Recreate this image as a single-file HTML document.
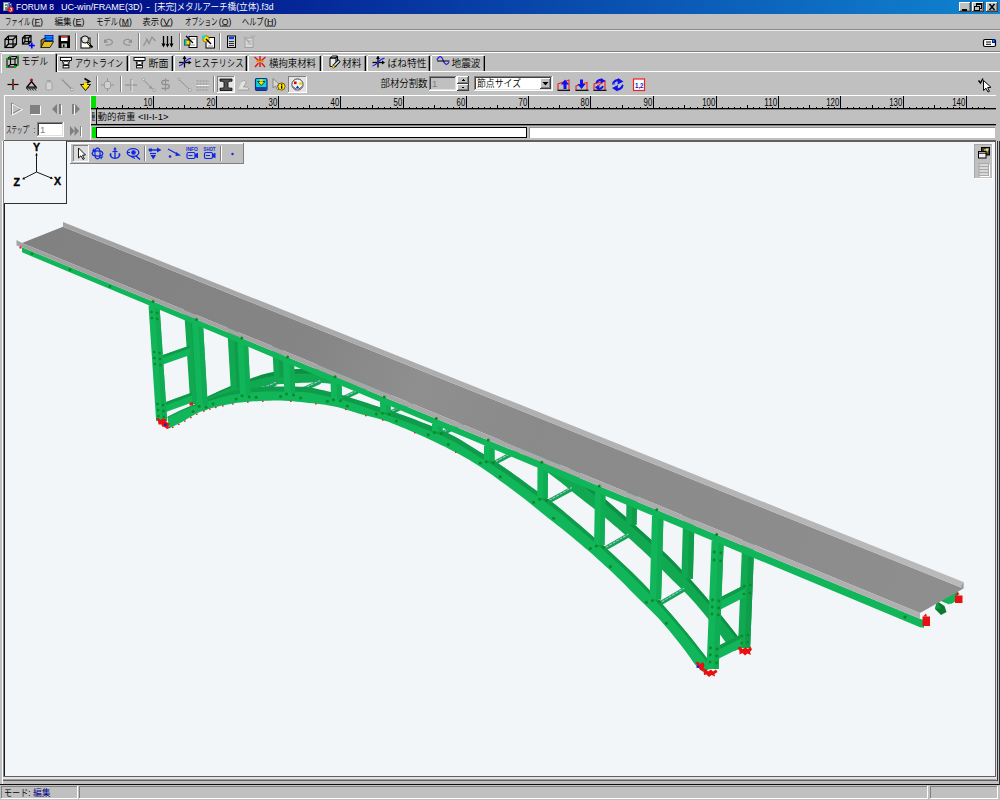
<!DOCTYPE html>
<html lang="ja"><head><meta charset="utf-8"><title>FORUM 8 UC-win/FRAME(3D) - [未完]メタルアーチ橋(立体).f3d</title>
<style>
html,body{margin:0;padding:0;}
body{width:1000px;height:800px;overflow:hidden;background:#c0c0c0;position:relative;font-family:"Liberation Sans","Noto Sans CJK JP",sans-serif;}
.r{position:absolute;overflow:hidden;}
.r svg{display:block;}
svg text{font-family:"Liberation Sans","Noto Sans CJK JP",sans-serif;white-space:pre;font-weight:350;}
</style></head><body>
<div id="titlebar" class="r" style="left:0px;top:0px;width:1000px;height:14px;"><svg width="1000" height="14" viewBox="0 0 1000 14" shape-rendering="crispEdges"><defs><linearGradient id="tg" x1="0" x2="1" y1="0" y2="0"><stop offset="0" stop-color="#000080"/><stop offset="1" stop-color="#1084d0"/></linearGradient></defs><rect x="0" y="0" width="1000" height="14" fill="url(#tg)"/><rect x="2.5" y="1.5" width="7" height="9.5" fill="#7c8c88"/><rect x="3.5" y="2.5" width="4.5" height="1.6" fill="#e8f0e8"/><rect x="3.5" y="2.5" width="1.6" height="7" fill="#e8f0e8"/><rect x="3.5" y="5.5" width="3.5" height="1.4" fill="#e8f0e8"/><rect x="5.5" y="7.5" width="2" height="3" fill="#2a9070"/><rect x="8.5" y="2.5" width="3.8" height="5" fill="#2848c8" rx="1.5"/><rect x="9.5" y="3.6" width="1.5" height="1.2" fill="#c0d0ff"/><g transform="translate(0,0)" shape-rendering="geometricPrecision"><circle cx="10.6" cy="9.6" r="3" fill="#e01818"/><path d="M10 8.2 h1.6 v2.2 c0 1 -1.6 1 -1.8 0.2" fill="none" stroke="#fff" stroke-width="0.9"/></g><text x="16" y="10.2" font-size="9.6" fill="#fff" textLength="38" lengthAdjust="spacingAndGlyphs">FORUM 8</text><text x="61" y="10.2" font-size="9.6" fill="#fff" textLength="81.5" lengthAdjust="spacingAndGlyphs">UC-win/FRAME(3D)</text><text x="146" y="10.2" font-size="9.6" fill="#fff" textLength="4" lengthAdjust="spacingAndGlyphs">-</text><text x="154.5" y="10.2" font-size="9.6" fill="#fff" textLength="119" lengthAdjust="spacingAndGlyphs">[未完]メタルアーチ橋(立体).f3d</text><rect x="959" y="2" width="12" height="10" fill="#c0c0c0"/><rect x="959" y="2" width="11" height="1" fill="#ffffff"/><rect x="959" y="2" width="1" height="9" fill="#ffffff"/><rect x="959" y="11" width="12" height="1" fill="#404040"/><rect x="970" y="2" width="1" height="10" fill="#404040"/><rect x="960" y="10" width="10" height="1" fill="#808080"/><rect x="969" y="3" width="1" height="8" fill="#808080"/><rect x="972" y="2" width="12" height="10" fill="#c0c0c0"/><rect x="972" y="2" width="11" height="1" fill="#ffffff"/><rect x="972" y="2" width="1" height="9" fill="#ffffff"/><rect x="972" y="11" width="12" height="1" fill="#404040"/><rect x="983" y="2" width="1" height="10" fill="#404040"/><rect x="973" y="10" width="10" height="1" fill="#808080"/><rect x="982" y="3" width="1" height="8" fill="#808080"/><rect x="986" y="2" width="12" height="10" fill="#c0c0c0"/><rect x="986" y="2" width="11" height="1" fill="#ffffff"/><rect x="986" y="2" width="1" height="9" fill="#ffffff"/><rect x="986" y="11" width="12" height="1" fill="#404040"/><rect x="997" y="2" width="1" height="10" fill="#404040"/><rect x="987" y="10" width="10" height="1" fill="#808080"/><rect x="996" y="3" width="1" height="8" fill="#808080"/><rect x="962" y="9" width="5" height="1.6" fill="#000"/><rect x="976" y="3.5" width="5" height="4.5" fill="none" stroke="#000" stroke-width="1"/><rect x="976" y="3" width="5" height="1.5" fill="#000"/><rect x="974.5" y="6" width="5" height="4" fill="#c0c0c0" stroke="#000" stroke-width="1"/><rect x="974" y="5.5" width="6" height="1.5" fill="#000"/><line x1="989.5" y1="4" x2="994.5" y2="10" stroke="#000" stroke-width="1.5" shape-rendering="geometricPrecision"/><line x1="994.5" y1="4" x2="989.5" y2="10" stroke="#000" stroke-width="1.5" shape-rendering="geometricPrecision"/></svg></div>
<div id="menubar" class="r" style="left:0px;top:14px;width:1000px;height:17px;"><svg width="1000" height="17" viewBox="0 14 1000 17" shape-rendering="crispEdges"><text x="5" y="24.5" font-size="9.6" fill="#000" textLength="25.5" lengthAdjust="spacingAndGlyphs">ファイル</text><text x="31.5" y="24.5" font-size="9.6" fill="#000" textLength="11.5" lengthAdjust="spacingAndGlyphs">(<tspan text-decoration="underline">F</tspan>)</text><text x="54.5" y="24.5" font-size="9.6" fill="#000" textLength="17" lengthAdjust="spacingAndGlyphs">編集</text><text x="72.5" y="24.5" font-size="9.6" fill="#000" textLength="12" lengthAdjust="spacingAndGlyphs">(<tspan text-decoration="underline">E</tspan>)</text><text x="96.3" y="24.5" font-size="9.6" fill="#000" textLength="21.5" lengthAdjust="spacingAndGlyphs">モデル</text><text x="118.8" y="24.5" font-size="9.6" fill="#000" textLength="13" lengthAdjust="spacingAndGlyphs">(<tspan text-decoration="underline">M</tspan>)</text><text x="142.5" y="24.5" font-size="9.6" fill="#000" textLength="16.5" lengthAdjust="spacingAndGlyphs">表示</text><text x="160" y="24.5" font-size="9.6" fill="#000" textLength="13" lengthAdjust="spacingAndGlyphs">(<tspan text-decoration="underline">V</tspan>)</text><text x="185" y="24.5" font-size="9.6" fill="#000" textLength="32.5" lengthAdjust="spacingAndGlyphs">オプション</text><text x="218.8" y="24.5" font-size="9.6" fill="#000" textLength="12.5" lengthAdjust="spacingAndGlyphs">(<tspan text-decoration="underline">O</tspan>)</text><text x="242" y="24.5" font-size="9.6" fill="#000" textLength="21.5" lengthAdjust="spacingAndGlyphs">ヘルプ</text><text x="264" y="24.5" font-size="9.6" fill="#000" textLength="12.5" lengthAdjust="spacingAndGlyphs">(<tspan text-decoration="underline">H</tspan>)</text><rect x="0" y="29" width="1000" height="1" fill="#8c8c8c"/><rect x="0" y="30" width="1000" height="1" fill="#ececec"/></svg></div>
<div id="toolbar1" class="r" style="left:0px;top:31px;width:1000px;height:22px;"><svg width="1000" height="22" viewBox="0 31 1000 22" shape-rendering="crispEdges"><rect x="0" y="51" width="1000" height="1" fill="#808080"/><rect x="0" y="52" width="1000" height="1" fill="#ffffff"/><rect x="75" y="33" width="1" height="17" fill="#808080"/><rect x="76" y="33" width="1" height="17" fill="#ffffff"/><rect x="97" y="33" width="1" height="17" fill="#808080"/><rect x="98" y="33" width="1" height="17" fill="#ffffff"/><rect x="138" y="33" width="1" height="17" fill="#808080"/><rect x="139" y="33" width="1" height="17" fill="#ffffff"/><rect x="179" y="33" width="1" height="17" fill="#808080"/><rect x="180" y="33" width="1" height="17" fill="#ffffff"/><rect x="219" y="33" width="1" height="17" fill="#808080"/><rect x="220" y="33" width="1" height="17" fill="#ffffff"/><g transform="translate(0,0)" shape-rendering="geometricPrecision"><rect x="5" y="39.5" width="8" height="8" fill="none" stroke="#000" stroke-width="1.2"/><rect x="8.5" y="36" width="8" height="8" fill="none" stroke="#000" stroke-width="1.2"/><line x1="5" y1="39.5" x2="8.5" y2="36" stroke="#000" stroke-width="1.2"/><line x1="13" y1="39.5" x2="16.5" y2="36" stroke="#000" stroke-width="1.2"/><line x1="5" y1="47.5" x2="8.5" y2="44" stroke="#000" stroke-width="1.2"/><line x1="13" y1="47.5" x2="16.5" y2="44" stroke="#000" stroke-width="1.2"/><rect x="22.5" y="38" width="6" height="6" fill="none" stroke="#000" stroke-width="1.2"/><rect x="25" y="35.5" width="6" height="6" fill="none" stroke="#000" stroke-width="1.2"/><line x1="22.5" y1="38" x2="25" y2="35.5" stroke="#000" stroke-width="1.2"/><line x1="28.5" y1="38" x2="31" y2="35.5" stroke="#000" stroke-width="1.2"/><line x1="22.5" y1="44" x2="25" y2="41.5" stroke="#000" stroke-width="1.2"/><line x1="28.5" y1="44" x2="31" y2="41.5" stroke="#000" stroke-width="1.2"/><rect x="31" y="42.5" width="1.6" height="6" fill="#0000ff"/><rect x="28.8" y="44.7" width="6" height="1.6" fill="#0000ff"/><polygon points="41,47.5 41,40 44,38.5 47,38.5 47,40" fill="#a08000" stroke="#000" stroke-width="0.8"/><polygon points="41,47.5 44,41.5 53.5,41.5 50,47.5" fill="#e0c020" stroke="#000" stroke-width="0.8"/><rect x="45" y="35.5" width="8" height="5" fill="#00c0ff" stroke="#0000c0" stroke-width="0.8"/><line x1="45" y1="37.2" x2="53" y2="37.2" stroke="#0000c0" stroke-width="0.7"/><line x1="45" y1="38.8" x2="53" y2="38.8" stroke="#0000c0" stroke-width="0.7"/><rect x="58.5" y="35.5" width="11.5" height="12.5" fill="#000"/><rect x="61" y="36.5" width="6.5" height="4.5" fill="#fff"/><rect x="61" y="36.5" width="6.5" height="1.2" fill="#e00000"/><rect x="61.5" y="43.5" width="5.5" height="4" fill="#c0c0c0"/><rect x="63" y="44.5" width="1.5" height="2.5" fill="#000"/><rect x="81" y="38" width="9" height="10" fill="#fff" stroke="#000" stroke-width="1"/><circle cx="85" cy="39.5" r="3.6" fill="#e0e0e0" stroke="#000" stroke-width="1"/><line x1="87.5" y1="42.5" x2="92.5" y2="47.5" stroke="#000" stroke-width="2"/><line x1="88" y1="43" x2="90" y2="45" stroke="#e0c000" stroke-width="1"/><path d="M105.5 45 C112 46 114 42 111 40 C109 38.5 106 39.5 105 41.5" fill="none" stroke="#909090" stroke-width="1.2"/><polygon points="104,39 104,43 108,42.5" fill="#909090"/><path d="M130.5 45 C124 46 122 42 125 40 C127 38.5 130 39.5 131 41.5" fill="none" stroke="#909090" stroke-width="1.2"/><polygon points="132,39 132,43 128,42.5" fill="#909090"/><polyline points="143.5,46 147,39.5 149,43.5 152,37 155.5,41" fill="none" stroke="#909090" stroke-width="1.2"/><line x1="146" y1="38" x2="148" y2="41" stroke="#909090" stroke-width="1"/><line x1="163.5" y1="36" x2="163.5" y2="46" stroke="#000" stroke-width="1.3"/><line x1="167.5" y1="36" x2="167.5" y2="46" stroke="#000" stroke-width="1.3"/><line x1="171.5" y1="36" x2="171.5" y2="46" stroke="#000" stroke-width="1.3"/><polygon points="161.5,43.5 165.5,43.5 163.5,47.5" fill="#000"/><polygon points="169.5,43.5 173.5,43.5 171.5,47.5" fill="#000"/><polygon points="165.8,44 169.2,44 167.5,47.5" fill="#000"/><rect x="189" y="36.5" width="8" height="11" fill="#fff" stroke="#000" stroke-width="1"/><rect x="184.5" y="40" width="5.5" height="5" fill="#ffe000" stroke="#000" stroke-width="0.8"/><line x1="186" y1="36" x2="193" y2="43" stroke="#000" stroke-width="1.2"/><line x1="190.5" y1="39" x2="195" y2="39" stroke="#808080" stroke-width="0.8"/><line x1="190.5" y1="45" x2="195" y2="45" stroke="#808080" stroke-width="0.8"/><rect x="184.5" y="40" width="2" height="5" fill="#00c0c0"/><rect x="206" y="37.5" width="8.5" height="10.5" fill="#fff" stroke="#000" stroke-width="1"/><circle cx="206" cy="39" r="3.2" fill="#ffe000" stroke="#806000" stroke-width="0.8"/><line x1="206" y1="39" x2="211" y2="44" stroke="#000" stroke-width="1.4"/><rect x="202" y="35.5" width="3" height="3" fill="#00e0e0"/><line x1="208" y1="46" x2="213" y2="46" stroke="#808080" stroke-width="0.8"/><rect x="227.5" y="36" width="8" height="11.5" fill="#d0d0d0" stroke="#000" stroke-width="1"/><rect x="229" y="37" width="5" height="2.2" fill="#0040ff"/><line x1="229" y1="41.5" x2="234" y2="41.5" stroke="#000" stroke-width="0.8"/><line x1="229" y1="43.5" x2="234" y2="43.5" stroke="#000" stroke-width="0.8"/><line x1="229" y1="45.5" x2="234" y2="45.5" stroke="#000" stroke-width="0.8"/><rect x="245" y="38" width="8" height="9.5" fill="#d8d8d8" stroke="#a0a0a0" stroke-width="1"/><line x1="244" y1="37" x2="250" y2="43" stroke="#a8a8a8" stroke-width="1.5"/><line x1="247" y1="41" x2="252" y2="41" stroke="#a8a8a8" stroke-width="0.8"/><line x1="247" y1="44" x2="252" y2="44" stroke="#a8a8a8" stroke-width="0.8"/><polygon points="250,35.5 256,35.5 253,39" fill="#b0b0b0"/><rect x="983.5" y="39.5" width="12" height="7" fill="#fff" stroke="#000" stroke-width="1.2" rx="1.5"/><line x1="986" y1="42" x2="991" y2="42" stroke="#000" stroke-width="1"/><line x1="986" y1="44.3" x2="991" y2="44.3" stroke="#000" stroke-width="1"/><rect x="992" y="39.5" width="3" height="3.5" fill="#0020c0"/><rect x="993" y="40.2" width="1.2" height="1.2" fill="#00e0ff"/></g></svg></div>
<div id="tabs" class="r" style="left:0px;top:53px;width:1000px;height:20px;"><svg width="1000" height="20" viewBox="0 53 1000 20" shape-rendering="crispEdges"><rect x="57" y="71" width="943" height="1" fill="#ffffff"/><rect x="58" y="55" width="69" height="1" fill="#ffffff"/><rect x="57" y="56" width="1" height="15" fill="#ffffff"/><rect x="127" y="56" width="1" height="15" fill="#000"/><rect x="126" y="56" width="1" height="15" fill="#808080"/><text x="75" y="67" font-size="9.8" fill="#000" textLength="48" lengthAdjust="spacingAndGlyphs">アウトライン</text><rect x="130" y="55" width="42" height="1" fill="#ffffff"/><rect x="129" y="56" width="1" height="15" fill="#ffffff"/><rect x="172" y="56" width="1" height="15" fill="#000"/><rect x="171" y="56" width="1" height="15" fill="#808080"/><text x="148.5" y="67" font-size="9.8" fill="#000" textLength="20" lengthAdjust="spacingAndGlyphs">断面</text><rect x="175" y="55" width="71" height="1" fill="#ffffff"/><rect x="174" y="56" width="1" height="15" fill="#ffffff"/><rect x="246" y="56" width="1" height="15" fill="#000"/><rect x="245" y="56" width="1" height="15" fill="#808080"/><text x="193.5" y="67" font-size="9.8" fill="#000" textLength="50" lengthAdjust="spacingAndGlyphs">ヒステリシス</text><rect x="249" y="55" width="71" height="1" fill="#ffffff"/><rect x="248" y="56" width="1" height="15" fill="#ffffff"/><rect x="320" y="56" width="1" height="15" fill="#000"/><rect x="319" y="56" width="1" height="15" fill="#808080"/><text x="269" y="67" font-size="9.8" fill="#000" textLength="47" lengthAdjust="spacingAndGlyphs">横拘束材料</text><rect x="323" y="55" width="42" height="1" fill="#ffffff"/><rect x="322" y="56" width="1" height="15" fill="#ffffff"/><rect x="365" y="56" width="1" height="15" fill="#000"/><rect x="364" y="56" width="1" height="15" fill="#808080"/><text x="342" y="67" font-size="9.8" fill="#000" textLength="19.5" lengthAdjust="spacingAndGlyphs">材料</text><rect x="368" y="55" width="61" height="1" fill="#ffffff"/><rect x="367" y="56" width="1" height="15" fill="#ffffff"/><rect x="429" y="56" width="1" height="15" fill="#000"/><rect x="428" y="56" width="1" height="15" fill="#808080"/><text x="387.5" y="67" font-size="9.8" fill="#000" textLength="39" lengthAdjust="spacingAndGlyphs">ばね特性</text><rect x="432" y="55" width="52" height="1" fill="#ffffff"/><rect x="431" y="56" width="1" height="15" fill="#ffffff"/><rect x="484" y="56" width="1" height="15" fill="#000"/><rect x="483" y="56" width="1" height="15" fill="#808080"/><text x="451.5" y="67" font-size="9.8" fill="#000" textLength="29" lengthAdjust="spacingAndGlyphs">地震波</text><rect x="2" y="53" width="53" height="1" fill="#ffffff"/><rect x="1" y="54" width="1" height="19" fill="#ffffff"/><rect x="56" y="54" width="1" height="18" fill="#000"/><rect x="55" y="54" width="1" height="18" fill="#808080"/><rect x="2" y="54" width="53" height="19" fill="#c0c0c0"/><text x="21.5" y="64.8" font-size="9.8" fill="#000" textLength="26.5" lengthAdjust="spacingAndGlyphs">モデル</text><g transform="translate(0,0)" shape-rendering="geometricPrecision"><rect x="7" y="59" width="8" height="8" fill="none" stroke="#000" stroke-width="1.1"/><rect x="10.5" y="56.5" width="7.5" height="8" fill="none" stroke="#000" stroke-width="1.1"/><line x1="7" y1="59" x2="10.5" y2="56.5" stroke="#000" stroke-width="1.1"/><line x1="15" y1="59" x2="18" y2="56.5" stroke="#000" stroke-width="1.1"/><line x1="7" y1="67" x2="10.5" y2="64.5" stroke="#000" stroke-width="1.1"/><line x1="15" y1="67" x2="18" y2="64.5" stroke="#000" stroke-width="1.1"/><rect x="6" y="58" width="2" height="2" fill="#00b000"/><rect x="14" y="66" width="2" height="2" fill="#00b000"/><rect x="6" y="66" width="2" height="2" fill="#00b000"/><rect x="17" y="55.5" width="2" height="2" fill="#00b000"/><rect x="17" y="63.5" width="2" height="2" fill="#00b000"/><rect x="9.5" y="55.5" width="2" height="2" fill="#00b000"/><rect x="60.5" y="57.5" width="11" height="3" fill="#fff" stroke="#000" stroke-width="0.9"/><path d="M62.5 60.5 l1 4.8 h5 l1 -4.8 z" fill="#fff" stroke="#000" stroke-width="0.9"/><rect x="63.7" y="61.3" width="4.6" height="3.2" fill="#fff" stroke="#000" stroke-width="0.8" rx="1"/><rect x="63.1" y="65.5" width="5.8" height="2.4" fill="#fff" stroke="#000" stroke-width="0.9"/><rect x="134" y="57.5" width="11" height="3" fill="#fff" stroke="#000" stroke-width="0.9"/><path d="M136 60.5 l1 4.8 h5 l1 -4.8 z" fill="#fff" stroke="#000" stroke-width="0.9"/><rect x="137.2" y="61.3" width="4.6" height="3.2" fill="#fff" stroke="#000" stroke-width="0.8" rx="1"/><rect x="136.6" y="65.5" width="5.8" height="2.4" fill="#fff" stroke="#000" stroke-width="0.9"/><line x1="184.5" y1="56.5" x2="184.5" y2="67.5" stroke="#000" stroke-width="1.3"/><line x1="179" y1="62.5" x2="190" y2="62.5" stroke="#000" stroke-width="1.3"/><polygon points="182.5,59 186.5,59 184.5,55.7" fill="#000"/><polygon points="188.5,60.5 188.5,64.5 191.5,62.5" fill="#000"/><path d="M179 66.0 C184 65.5 185 58.5 191 58.3" fill="none" stroke="#2020e0" stroke-width="1.2"/><line x1="378" y1="56.5" x2="378" y2="67.5" stroke="#000" stroke-width="1.3"/><line x1="372.5" y1="62.5" x2="383.5" y2="62.5" stroke="#000" stroke-width="1.3"/><polygon points="376,59 380,59 378,55.7" fill="#000"/><polygon points="382,60.5 382,64.5 385,62.5" fill="#000"/><path d="M372.5 66.0 C377.5 65.5 378.5 58.5 384.5 58.3" fill="none" stroke="#2020e0" stroke-width="1.2"/><line x1="260" y1="56" x2="260" y2="67" stroke="#e01010" stroke-width="1.4"/><line x1="254.5" y1="57" x2="258.5" y2="60.5" stroke="#e01010" stroke-width="1.3"/><line x1="265.5" y1="57" x2="261.5" y2="60.5" stroke="#e01010" stroke-width="1.3"/><line x1="256" y1="61.5" x2="264" y2="61.5" stroke="#e0a000" stroke-width="1.2"/><line x1="255" y1="67" x2="258.5" y2="63" stroke="#e01010" stroke-width="1.3"/><line x1="265" y1="67" x2="261.5" y2="63" stroke="#e01010" stroke-width="1.3"/><path d="M330 58 l2.5 -2 h5 l-1.5 2 z M330 58 h6 v8.5 h-6 z M336 58 l1.5 -2 v7" fill="#e8e8e8" stroke="#000" stroke-width="1"/><line x1="333.5" y1="66.5" x2="339.5" y2="60.5" stroke="#000" stroke-width="3.2"/><line x1="334" y1="66" x2="339" y2="61" stroke="#d0f0ff" stroke-width="1.6"/><circle cx="333.5" cy="66.7" r="1.3" fill="#ffe000" stroke="#605000" stroke-width="0.6"/><path d="M437 60 C439 55.5 441.5 55.5 443 60 S 447 66 449 62" fill="none" stroke="#2020e0" stroke-width="1.2"/><line x1="437" y1="61" x2="444" y2="61" stroke="#000" stroke-width="1"/><line x1="444" y1="61" x2="449.5" y2="61" stroke="#000" stroke-width="1"/></g></svg></div>
<div id="toolbar2" class="r" style="left:0px;top:73px;width:1000px;height:22px;"><svg width="1000" height="22" viewBox="0 73 1000 22" shape-rendering="crispEdges"><rect x="96" y="76" width="1" height="16" fill="#808080"/><rect x="97" y="76" width="1" height="16" fill="#ffffff"/><rect x="120" y="76" width="1" height="16" fill="#808080"/><rect x="121" y="76" width="1" height="16" fill="#ffffff"/><rect x="213" y="76" width="1" height="16" fill="#808080"/><rect x="214" y="76" width="1" height="16" fill="#ffffff"/><rect x="217" y="76" width="18" height="17" fill="#e4e4e4"/><rect x="217" y="76" width="18" height="1" fill="#808080"/><rect x="217" y="76" width="1" height="17" fill="#808080"/><rect x="217" y="92" width="18" height="1" fill="#ffffff"/><rect x="234" y="76" width="1" height="17" fill="#ffffff"/><rect x="288" y="76" width="19" height="17" fill="#e4e4e4"/><rect x="288" y="76" width="19" height="1" fill="#808080"/><rect x="288" y="76" width="1" height="17" fill="#808080"/><rect x="288" y="92" width="19" height="1" fill="#ffffff"/><rect x="306" y="76" width="1" height="17" fill="#ffffff"/><text x="380.5" y="87" font-size="9.8" fill="#000" textLength="47" lengthAdjust="spacingAndGlyphs">部材分割数</text><rect x="429" y="76" width="28" height="15" fill="#c0c0c0"/><rect x="429" y="76" width="28" height="1" fill="#808080"/><rect x="429" y="76" width="1" height="15" fill="#808080"/><rect x="430" y="77" width="26" height="1" fill="#404040"/><rect x="430" y="77" width="1" height="13" fill="#404040"/><rect x="429" y="90" width="28" height="1" fill="#ffffff"/><rect x="456" y="76" width="1" height="15" fill="#ffffff"/><rect x="430" y="89" width="26" height="1" fill="#dfdfdf"/><rect x="455" y="77" width="1" height="13" fill="#dfdfdf"/><text x="432" y="87" font-size="9.5" fill="#808080">1</text><rect x="457" y="76" width="12" height="8" fill="#c0c0c0"/><rect x="457" y="76" width="11" height="1" fill="#ffffff"/><rect x="457" y="76" width="1" height="7" fill="#ffffff"/><rect x="457" y="83" width="12" height="1" fill="#404040"/><rect x="468" y="76" width="1" height="8" fill="#404040"/><rect x="458" y="82" width="10" height="1" fill="#808080"/><rect x="467" y="77" width="1" height="6" fill="#808080"/><rect x="457" y="84" width="12" height="7" fill="#c0c0c0"/><rect x="457" y="84" width="11" height="1" fill="#ffffff"/><rect x="457" y="84" width="1" height="6" fill="#ffffff"/><rect x="457" y="90" width="12" height="1" fill="#404040"/><rect x="468" y="84" width="1" height="7" fill="#404040"/><rect x="458" y="89" width="10" height="1" fill="#808080"/><rect x="467" y="85" width="1" height="5" fill="#808080"/><polygon points="461,81 465,81 463,79" fill="#000"/><polygon points="461,86.5 465,86.5 463,88.5" fill="#000"/><rect x="474" y="76" width="79" height="15" fill="#fff"/><rect x="474" y="76" width="79" height="1" fill="#808080"/><rect x="474" y="76" width="1" height="15" fill="#808080"/><rect x="475" y="77" width="77" height="1" fill="#404040"/><rect x="475" y="77" width="1" height="13" fill="#404040"/><rect x="474" y="90" width="79" height="1" fill="#ffffff"/><rect x="552" y="76" width="1" height="15" fill="#ffffff"/><rect x="475" y="89" width="77" height="1" fill="#dfdfdf"/><rect x="551" y="77" width="1" height="13" fill="#dfdfdf"/><text x="477" y="87" font-size="9.8" fill="#000" textLength="44" lengthAdjust="spacingAndGlyphs">節点サイズ</text><rect x="540" y="78" width="11" height="11" fill="#c0c0c0"/><rect x="540" y="78" width="10" height="1" fill="#ffffff"/><rect x="540" y="78" width="1" height="10" fill="#ffffff"/><rect x="540" y="88" width="11" height="1" fill="#404040"/><rect x="550" y="78" width="1" height="11" fill="#404040"/><rect x="541" y="87" width="9" height="1" fill="#808080"/><rect x="549" y="79" width="1" height="9" fill="#808080"/><polygon points="542.5,82 548.5,82 545.5,85.5" fill="#000" shape-rendering="geometricPrecision"/><g transform="translate(0,0)" shape-rendering="geometricPrecision"><line x1="13" y1="79" x2="13" y2="90" stroke="#000" stroke-width="1.2"/><line x1="7.5" y1="84.5" x2="18.5" y2="84.5" stroke="#000" stroke-width="1.2"/><rect x="12" y="83.5" width="2" height="2" fill="#e00000"/><circle cx="31.5" cy="80" r="1.5" fill="#d00000"/><polygon points="31.5,81.5 27,87 36,87" fill="none" stroke="#000" stroke-width="1.2"/><line x1="26" y1="88" x2="37" y2="88" stroke="#000" stroke-width="1"/><line x1="27" y1="88.5" x2="28.5" y2="90.5" stroke="#000" stroke-width="0.9"/><line x1="29.5" y1="88.5" x2="31" y2="90.5" stroke="#000" stroke-width="0.9"/><line x1="32" y1="88.5" x2="33.5" y2="90.5" stroke="#000" stroke-width="0.9"/><line x1="34.5" y1="88.5" x2="36" y2="90.5" stroke="#000" stroke-width="0.9"/><rect x="46" y="82" width="6" height="8" fill="#d4d4d4" stroke="#a0a0a0" stroke-width="1" rx="1.5"/><line x1="47" y1="80.5" x2="51" y2="80.5" stroke="#a0a0a0" stroke-width="1"/><line x1="62" y1="79.5" x2="72" y2="89.5" stroke="#909090" stroke-width="1.2"/><circle cx="72" cy="89.5" r="1.4" fill="#f0f0f0" stroke="#909090" stroke-width="0.9"/><circle cx="62" cy="79.5" r="0.9" fill="#f0f0f0" stroke="#909090" stroke-width="0.7"/><path d="M84.5 78.5 l5 3 l-6 3 l5 3" fill="none" stroke="#000" stroke-width="1.6"/><polygon points="80.5,84.5 90.5,84.5 85.5,90.5" fill="#ffe000" stroke="#000" stroke-width="0.9"/><rect x="83.8" y="82.5" width="3.4" height="3" fill="#ffe000"/><line x1="107.5" y1="78.5" x2="107.5" y2="91" stroke="#909090" stroke-width="1"/><line x1="101" y1="85" x2="114" y2="85" stroke="#909090" stroke-width="1"/><rect x="104.5" y="81.5" width="6" height="7" fill="#d0d0d0" stroke="#a0a0a0" stroke-width="1" rx="1.5"/><line x1="131" y1="79" x2="131" y2="91" stroke="#909090" stroke-width="1.2"/><line x1="125" y1="85" x2="137" y2="85" stroke="#909090" stroke-width="1.2"/><line x1="132" y1="80" x2="132" y2="92" stroke="#fff" stroke-width="0.6"/><line x1="143" y1="79.5" x2="153" y2="89.5" stroke="#909090" stroke-width="1"/><circle cx="143.5" cy="79.5" r="1.2" fill="#f0f0f0" stroke="#909090" stroke-width="0.8"/><circle cx="154" cy="90" r="1.3" fill="#f0f0f0" stroke="#909090" stroke-width="0.8"/><polygon points="151.5,85.5 151.5,88.5 148.5,88.5" fill="#909090"/><path d="M169 80.5 h-5 c-3 0 -3 4 0 4 h3 c3 0 3 4 0 4 h-5.5" fill="none" stroke="#909090" stroke-width="1.3"/><line x1="165.5" y1="78.5" x2="165.5" y2="91" stroke="#909090" stroke-width="1"/><line x1="179" y1="79.5" x2="189.5" y2="89.5" stroke="#909090" stroke-width="1"/><circle cx="179" cy="79.3" r="1.1" fill="#f0f0f0" stroke="#909090" stroke-width="0.8"/><circle cx="190" cy="90" r="1.4" fill="#f0f0f0" stroke="#909090" stroke-width="0.8"/><line x1="196.5" y1="81" x2="209" y2="81" stroke="#909090" stroke-width="1" stroke-dasharray="2 1"/><line x1="196.5" y1="84" x2="209" y2="84" stroke="#909090" stroke-width="1" stroke-dasharray="2 1"/><line x1="196.5" y1="87" x2="209" y2="87" stroke="#909090" stroke-width="1" stroke-dasharray="2 1"/><line x1="196.5" y1="90" x2="209" y2="90" stroke="#909090" stroke-width="1" stroke-dasharray="2 1"/><line x1="196.5" y1="85.5" x2="209" y2="85.5" stroke="#fff" stroke-width="0.8"/><path d="M220 79 h12 v2.2 c-3.5 0 -4 0.5 -4 2 v3 c0 1.5 0.5 2 4 2 v2.3 h-12 v-2.3 c3.5 0 4 -0.5 4 -2 v-3 c0 -1.5 -0.5 -2 -4 -2 z" fill="#505050" stroke="#000" stroke-width="0.8"/><path d="M238 90 h11.5 l-2 -3 h-4 l2.5 -4 c0.8 -2.5 -3 -4 -4.5 -1" fill="#e0e0e0" stroke="#a0a0a0" stroke-width="1"/><rect x="255.5" y="78.5" width="11.5" height="12" fill="#00d8e8" stroke="#103080" stroke-width="1.2" rx="1.2"/><rect x="256" y="87" width="10.5" height="3" fill="#2040a0"/><polygon points="257.5,81.5 265,81.5 261.2,85.5" fill="#ffe000" stroke="#000" stroke-width="0.7"/><rect x="259.8" y="79.3" width="3" height="2.4" fill="#ffe000"/><polygon points="273,78.5 273,88 275.5,86 277.5,90 279,89.3 277,85.3 280,85" fill="#d8d8d8" stroke="#808080" stroke-width="0.9"/><circle cx="281.5" cy="86.5" r="3.6" fill="#ffe800" stroke="#504000" stroke-width="0.8"/><rect x="281" y="85.5" width="1.3" height="3.2" fill="#000"/><rect x="281" y="83.8" width="1.3" height="1.1" fill="#000"/><circle cx="297.5" cy="84.5" r="5.6" fill="#f4f4f4" stroke="#404040" stroke-width="1"/><rect x="294" y="81.5" width="2.6" height="2.6" fill="#e00000"/><rect x="299.2" y="82.3" width="2.6" height="2.6" fill="#e8d000"/><polygon points="295.5,88.5 299.5,88.5 297.5,85.5" fill="#1030c0"/><line x1="293" y1="86.5" x2="296" y2="89" stroke="#404040" stroke-width="0.8"/><line x1="302" y1="86.5" x2="299" y2="89" stroke="#404040" stroke-width="0.8"/><polyline points="558,90 558,84 569,80 569,90" fill="none" stroke="#f02020" stroke-width="1.1"/><line x1="557.5" y1="90.3" x2="570" y2="90.3" stroke="#000" stroke-width="1.2"/><polygon points="561,84.5 569,84.5 565,79.5" fill="#1010f0"/><rect x="563.5" y="84" width="3" height="5" fill="#1010f0"/><polyline points="576,90 576,86 582,84 587,82.5 587,90" fill="none" stroke="#f02020" stroke-width="1.1"/><line x1="575.5" y1="90.3" x2="588.5" y2="90.3" stroke="#000" stroke-width="1.2"/><polygon points="577.5,84 585.5,84 581.5,89" fill="#1010f0"/><rect x="580" y="79.5" width="3" height="5" fill="#1010f0"/><polyline points="594,90 594,84 605,81 605,90" fill="none" stroke="#f02020" stroke-width="1.1"/><line x1="593.5" y1="90.3" x2="606.5" y2="90.3" stroke="#000" stroke-width="1.2"/><path d="M596.5 83 a4 4 0 0 1 6 -2.5" fill="none" stroke="#1010f0" stroke-width="2"/><polygon points="601,78 605.5,81 600.5,83.5" fill="#1010f0"/><path d="M603 86 a4 4 0 0 1 -6 2" fill="none" stroke="#1010f0" stroke-width="2"/><polygon points="599,90.5 594.8,87 599.5,85" fill="#1010f0"/><line x1="597" y1="86" x2="603" y2="82.5" stroke="#f02020" stroke-width="1"/><path d="M613 84.5 a4.5 4.5 0 0 1 7 -3.5" fill="none" stroke="#1010f0" stroke-width="2.2"/><polygon points="618,78 623.5,81.5 617.5,84.5" fill="#1010f0"/><path d="M622.5 85 a4.5 4.5 0 0 1 -7 3.5" fill="none" stroke="#1010f0" stroke-width="2.2"/><polygon points="617.5,91.5 612,88 618,85" fill="#1010f0"/><path d="M613.5 83 l2 2 M621 86 l2 -2" fill="none" stroke="#4080ff" stroke-width="1"/><rect x="633.5" y="79" width="11" height="11.5" fill="#fff" stroke="#f02020" stroke-width="1.2"/><text x="635" y="88" font-size="7.5" fill="#1010d0" textLength="8.5" lengthAdjust="spacingAndGlyphs" style="font-weight:bold">1,2</text><polyline points="978.5,80.5 980.5,83 983,78.5" fill="none" stroke="#000" stroke-width="1.5"/><polygon points="983.5,80.5 983.5,90.5 986,88.3 988,92 989.5,91.3 987.6,87.6 991,87.3" fill="#fff" stroke="#000" stroke-width="1"/></g></svg></div>
<div id="timepanel" class="r" style="left:0px;top:95px;width:1000px;height:46px;"><svg width="1000" height="46" viewBox="0 95 1000 46" shape-rendering="crispEdges"><rect x="4" y="95" width="992" height="1" fill="#ffffff"/><rect x="4" y="95" width="1" height="45" fill="#ffffff"/><rect x="90" y="96" width="1" height="44" fill="#ffffff"/><g transform="translate(0,0)" shape-rendering="geometricPrecision"><polygon points="11.5,103 11.5,114 21.5,108.5" fill="none" stroke="#808080" stroke-width="1"/><polygon points="12.5,104 12.5,115 22.5,109.5" fill="none" stroke="#fff" stroke-width="1" opacity="0.9"/></g><rect x="30" y="105" width="10" height="9" fill="#808080"/><rect x="31" y="114" width="10" height="1" fill="#ffffff"/><rect x="40" y="106" width="1" height="9" fill="#ffffff"/><polygon points="57,104 57,114 52,109" fill="#808080" shape-rendering="geometricPrecision"/><rect x="58.5" y="104" width="2" height="10" fill="#808080"/><rect x="60.5" y="105" width="1" height="10" fill="#ffffff"/><polygon points="75,104 75,114 80,109" fill="#808080" shape-rendering="geometricPrecision"/><rect x="71.5" y="104" width="2" height="10" fill="#808080"/><rect x="73.5" y="105" width="1" height="10" fill="#ffffff"/><text x="6" y="133" font-size="9.5" fill="#000" textLength="29" lengthAdjust="spacingAndGlyphs">ステップ゜:</text><rect x="37" y="122" width="27" height="15" fill="#fff"/><rect x="37" y="122" width="27" height="1" fill="#808080"/><rect x="37" y="122" width="1" height="15" fill="#808080"/><rect x="38" y="123" width="25" height="1" fill="#404040"/><rect x="38" y="123" width="1" height="13" fill="#404040"/><rect x="37" y="136" width="27" height="1" fill="#ffffff"/><rect x="63" y="122" width="1" height="15" fill="#ffffff"/><rect x="38" y="135" width="25" height="1" fill="#dfdfdf"/><rect x="62" y="123" width="1" height="13" fill="#dfdfdf"/><text x="40" y="133" font-size="9.5" fill="#808080">1</text><polygon points="70,126 70,136 74.5,131" fill="#808080" shape-rendering="geometricPrecision"/><polygon points="74.5,126 74.5,136 79,131" fill="#808080" shape-rendering="geometricPrecision"/><rect x="79.5" y="126" width="1.6" height="10" fill="#808080"/><rect x="81" y="127" width="1" height="10" fill="#ffffff"/><rect x="91" y="96" width="5" height="12" fill="#00e000"/><rect x="91" y="108" width="905" height="1" fill="#000"/><rect x="91" y="109" width="905" height="1" fill="#808080"/><rect x="97" y="107" width="1" height="1" fill="#000"/><rect x="103" y="107" width="1" height="1" fill="#000"/><rect x="109" y="107" width="1" height="1" fill="#000"/><rect x="116" y="107" width="1" height="1" fill="#000"/><rect x="122" y="105" width="1" height="3" fill="#000"/><rect x="128" y="107" width="1" height="1" fill="#000"/><rect x="134" y="107" width="1" height="1" fill="#000"/><rect x="140" y="107" width="1" height="1" fill="#000"/><rect x="147" y="107" width="1" height="1" fill="#000"/><rect x="153" y="96" width="1" height="12" fill="#000"/><text x="143.6" y="105.6" font-size="10.2" fill="#000" textLength="8.6" lengthAdjust="spacingAndGlyphs">10</text><rect x="159" y="107" width="1" height="1" fill="#000"/><rect x="166" y="107" width="1" height="1" fill="#000"/><rect x="172" y="107" width="1" height="1" fill="#000"/><rect x="178" y="107" width="1" height="1" fill="#000"/><rect x="184" y="105" width="1" height="3" fill="#000"/><rect x="190" y="107" width="1" height="1" fill="#000"/><rect x="197" y="107" width="1" height="1" fill="#000"/><rect x="203" y="107" width="1" height="1" fill="#000"/><rect x="209" y="107" width="1" height="1" fill="#000"/><rect x="216" y="96" width="1" height="12" fill="#000"/><text x="206.6" y="105.6" font-size="10.2" fill="#000" textLength="8.6" lengthAdjust="spacingAndGlyphs">20</text><rect x="222" y="107" width="1" height="1" fill="#000"/><rect x="228" y="107" width="1" height="1" fill="#000"/><rect x="234" y="107" width="1" height="1" fill="#000"/><rect x="240" y="107" width="1" height="1" fill="#000"/><rect x="247" y="105" width="1" height="3" fill="#000"/><rect x="253" y="107" width="1" height="1" fill="#000"/><rect x="259" y="107" width="1" height="1" fill="#000"/><rect x="266" y="107" width="1" height="1" fill="#000"/><rect x="272" y="107" width="1" height="1" fill="#000"/><rect x="278" y="96" width="1" height="12" fill="#000"/><text x="268.6" y="105.6" font-size="10.2" fill="#000" textLength="8.6" lengthAdjust="spacingAndGlyphs">30</text><rect x="284" y="107" width="1" height="1" fill="#000"/><rect x="290" y="107" width="1" height="1" fill="#000"/><rect x="297" y="107" width="1" height="1" fill="#000"/><rect x="303" y="107" width="1" height="1" fill="#000"/><rect x="309" y="105" width="1" height="3" fill="#000"/><rect x="316" y="107" width="1" height="1" fill="#000"/><rect x="322" y="107" width="1" height="1" fill="#000"/><rect x="328" y="107" width="1" height="1" fill="#000"/><rect x="334" y="107" width="1" height="1" fill="#000"/><rect x="340" y="96" width="1" height="12" fill="#000"/><text x="330.6" y="105.6" font-size="10.2" fill="#000" textLength="8.6" lengthAdjust="spacingAndGlyphs">40</text><rect x="347" y="107" width="1" height="1" fill="#000"/><rect x="353" y="107" width="1" height="1" fill="#000"/><rect x="359" y="107" width="1" height="1" fill="#000"/><rect x="366" y="107" width="1" height="1" fill="#000"/><rect x="372" y="105" width="1" height="3" fill="#000"/><rect x="378" y="107" width="1" height="1" fill="#000"/><rect x="384" y="107" width="1" height="1" fill="#000"/><rect x="390" y="107" width="1" height="1" fill="#000"/><rect x="397" y="107" width="1" height="1" fill="#000"/><rect x="403" y="96" width="1" height="12" fill="#000"/><text x="393.6" y="105.6" font-size="10.2" fill="#000" textLength="8.6" lengthAdjust="spacingAndGlyphs">50</text><rect x="409" y="107" width="1" height="1" fill="#000"/><rect x="416" y="107" width="1" height="1" fill="#000"/><rect x="422" y="107" width="1" height="1" fill="#000"/><rect x="428" y="107" width="1" height="1" fill="#000"/><rect x="434" y="105" width="1" height="3" fill="#000"/><rect x="440" y="107" width="1" height="1" fill="#000"/><rect x="447" y="107" width="1" height="1" fill="#000"/><rect x="453" y="107" width="1" height="1" fill="#000"/><rect x="459" y="107" width="1" height="1" fill="#000"/><rect x="466" y="96" width="1" height="12" fill="#000"/><text x="456.6" y="105.6" font-size="10.2" fill="#000" textLength="8.6" lengthAdjust="spacingAndGlyphs">60</text><rect x="472" y="107" width="1" height="1" fill="#000"/><rect x="478" y="107" width="1" height="1" fill="#000"/><rect x="484" y="107" width="1" height="1" fill="#000"/><rect x="490" y="107" width="1" height="1" fill="#000"/><rect x="497" y="105" width="1" height="3" fill="#000"/><rect x="503" y="107" width="1" height="1" fill="#000"/><rect x="509" y="107" width="1" height="1" fill="#000"/><rect x="516" y="107" width="1" height="1" fill="#000"/><rect x="522" y="107" width="1" height="1" fill="#000"/><rect x="528" y="96" width="1" height="12" fill="#000"/><text x="518.6" y="105.6" font-size="10.2" fill="#000" textLength="8.6" lengthAdjust="spacingAndGlyphs">70</text><rect x="534" y="107" width="1" height="1" fill="#000"/><rect x="540" y="107" width="1" height="1" fill="#000"/><rect x="547" y="107" width="1" height="1" fill="#000"/><rect x="553" y="107" width="1" height="1" fill="#000"/><rect x="559" y="105" width="1" height="3" fill="#000"/><rect x="566" y="107" width="1" height="1" fill="#000"/><rect x="572" y="107" width="1" height="1" fill="#000"/><rect x="578" y="107" width="1" height="1" fill="#000"/><rect x="584" y="107" width="1" height="1" fill="#000"/><rect x="590" y="96" width="1" height="12" fill="#000"/><text x="580.6" y="105.6" font-size="10.2" fill="#000" textLength="8.6" lengthAdjust="spacingAndGlyphs">80</text><rect x="597" y="107" width="1" height="1" fill="#000"/><rect x="603" y="107" width="1" height="1" fill="#000"/><rect x="609" y="107" width="1" height="1" fill="#000"/><rect x="616" y="107" width="1" height="1" fill="#000"/><rect x="622" y="105" width="1" height="3" fill="#000"/><rect x="628" y="107" width="1" height="1" fill="#000"/><rect x="634" y="107" width="1" height="1" fill="#000"/><rect x="640" y="107" width="1" height="1" fill="#000"/><rect x="647" y="107" width="1" height="1" fill="#000"/><rect x="653" y="96" width="1" height="12" fill="#000"/><text x="643.6" y="105.6" font-size="10.2" fill="#000" textLength="8.6" lengthAdjust="spacingAndGlyphs">90</text><rect x="659" y="107" width="1" height="1" fill="#000"/><rect x="666" y="107" width="1" height="1" fill="#000"/><rect x="672" y="107" width="1" height="1" fill="#000"/><rect x="678" y="107" width="1" height="1" fill="#000"/><rect x="684" y="105" width="1" height="3" fill="#000"/><rect x="690" y="107" width="1" height="1" fill="#000"/><rect x="697" y="107" width="1" height="1" fill="#000"/><rect x="703" y="107" width="1" height="1" fill="#000"/><rect x="709" y="107" width="1" height="1" fill="#000"/><rect x="716" y="96" width="1" height="12" fill="#000"/><text x="702.3" y="105.6" font-size="10.2" fill="#000" textLength="12.9" lengthAdjust="spacingAndGlyphs">100</text><rect x="722" y="107" width="1" height="1" fill="#000"/><rect x="728" y="107" width="1" height="1" fill="#000"/><rect x="734" y="107" width="1" height="1" fill="#000"/><rect x="740" y="107" width="1" height="1" fill="#000"/><rect x="747" y="105" width="1" height="3" fill="#000"/><rect x="753" y="107" width="1" height="1" fill="#000"/><rect x="759" y="107" width="1" height="1" fill="#000"/><rect x="766" y="107" width="1" height="1" fill="#000"/><rect x="772" y="107" width="1" height="1" fill="#000"/><rect x="778" y="96" width="1" height="12" fill="#000"/><text x="764.3" y="105.6" font-size="10.2" fill="#000" textLength="12.9" lengthAdjust="spacingAndGlyphs">110</text><rect x="784" y="107" width="1" height="1" fill="#000"/><rect x="790" y="107" width="1" height="1" fill="#000"/><rect x="797" y="107" width="1" height="1" fill="#000"/><rect x="803" y="107" width="1" height="1" fill="#000"/><rect x="809" y="105" width="1" height="3" fill="#000"/><rect x="816" y="107" width="1" height="1" fill="#000"/><rect x="822" y="107" width="1" height="1" fill="#000"/><rect x="828" y="107" width="1" height="1" fill="#000"/><rect x="834" y="107" width="1" height="1" fill="#000"/><rect x="840" y="96" width="1" height="12" fill="#000"/><text x="826.3" y="105.6" font-size="10.2" fill="#000" textLength="12.9" lengthAdjust="spacingAndGlyphs">120</text><rect x="847" y="107" width="1" height="1" fill="#000"/><rect x="853" y="107" width="1" height="1" fill="#000"/><rect x="859" y="107" width="1" height="1" fill="#000"/><rect x="866" y="107" width="1" height="1" fill="#000"/><rect x="872" y="105" width="1" height="3" fill="#000"/><rect x="878" y="107" width="1" height="1" fill="#000"/><rect x="884" y="107" width="1" height="1" fill="#000"/><rect x="890" y="107" width="1" height="1" fill="#000"/><rect x="897" y="107" width="1" height="1" fill="#000"/><rect x="903" y="96" width="1" height="12" fill="#000"/><text x="889.3" y="105.6" font-size="10.2" fill="#000" textLength="12.9" lengthAdjust="spacingAndGlyphs">130</text><rect x="909" y="107" width="1" height="1" fill="#000"/><rect x="916" y="107" width="1" height="1" fill="#000"/><rect x="922" y="107" width="1" height="1" fill="#000"/><rect x="928" y="107" width="1" height="1" fill="#000"/><rect x="934" y="105" width="1" height="3" fill="#000"/><rect x="940" y="107" width="1" height="1" fill="#000"/><rect x="947" y="107" width="1" height="1" fill="#000"/><rect x="953" y="107" width="1" height="1" fill="#000"/><rect x="959" y="107" width="1" height="1" fill="#000"/><rect x="966" y="96" width="1" height="12" fill="#000"/><text x="952.3" y="105.6" font-size="10.2" fill="#000" textLength="12.9" lengthAdjust="spacingAndGlyphs">140</text><rect x="972" y="107" width="1" height="1" fill="#000"/><rect x="978" y="107" width="1" height="1" fill="#000"/><rect x="984" y="107" width="1" height="1" fill="#000"/><text x="90" y="120" font-size="9.5" fill="#000" textLength="5.5" lengthAdjust="spacingAndGlyphs" clip-path="url(#cl1)">重</text><defs><clipPath id="cl1"><rect x="92" y="108" width="4" height="16"/></clipPath></defs><rect x="96" y="108" width="1" height="16" fill="#000"/><text x="97.5" y="120" font-size="9.6" fill="#000" textLength="71" lengthAdjust="spacingAndGlyphs">動的荷重 &lt;II-I-1&gt;</text><rect x="91" y="124" width="905" height="1" fill="#000"/><rect x="91" y="125" width="905" height="1" fill="#808080"/><rect x="92" y="127" width="4" height="11" fill="#00e000"/><rect x="96" y="127" width="431" height="11" fill="#000"/><rect x="97" y="128" width="429" height="9" fill="#fff"/><rect x="529" y="127" width="466" height="11" fill="#909090"/><rect x="530" y="128" width="465" height="10" fill="#fff"/><rect x="4" y="140" width="992" height="1" fill="#606060"/></svg></div>
<div id="viewport" class="r" style="left:0px;top:141px;width:1000px;height:644px;"><svg width="1000" height="644" viewBox="0 141 1000 644"><rect x="0" y="141" width="1000" height="644" fill="#c0c0c0"/><rect x="5" y="141" width="990" height="635" fill="#f2f6f8"/><polygon points="203.11,411.36 207.09,409.38 211.07,407.35 215.05,405.25 219.03,402.96 223.01,400.55 226.99,398.2 230.97,396.04 234.95,394.23 238.93,392.7 242.92,391.38 246.9,390.21 250.88,389.19 254.86,388.28 258.84,387.43 262.82,386.61 266.8,385.87 270.78,385.24 274.76,384.75 278.74,384.33 282.72,383.95 286.7,383.63 290.68,383.37 294.66,383.17 298.65,382.99 302.63,382.84 306.61,382.7 310.59,382.61 314.57,382.57 318.55,382.68 322.53,382.94 326.51,383.28 330.49,383.66 334.47,384.01 338.45,384.37 342.43,384.75 346.41,385.15 350.39,385.6 354.38,386.08 358.36,386.61 362.34,387.19 366.32,387.83 370.3,388.57 374.28,389.56 378.26,390.74 382.24,392.04 386.22,393.36 390.2,394.63 394.18,395.77 398.16,396.78 402.14,397.73 406.12,398.68 410.11,399.66 414.09,400.74 418.07,401.97 422.05,403.38 426.03,404.91 430.01,406.51 433.99,408.12 437.97,409.74 441.95,411.4 445.93,413.1 449.91,414.82 453.89,416.57 457.87,418.36 461.85,420.18 465.84,422.02 469.82,423.9 473.8,425.81 477.78,427.75 481.76,429.74 485.74,431.78 489.72,433.87 493.7,436.03 497.68,438.25 501.66,440.56 505.64,442.96 509.62,445.44 513.6,447.99 517.58,450.61 521.57,453.31 525.55,456.12 529.53,458.99 533.51,461.89 537.49,464.8 541.47,467.71 545.45,470.66 549.43,473.63 553.41,476.63 557.39,479.68 561.37,482.77 565.35,485.95 569.33,489.18 573.31,492.44 577.3,495.67 581.28,498.84 585.26,501.94 589.24,505.02 593.22,508.12 597.2,511.29 601.18,514.52 605.16,517.78 609.14,521.08 613.12,524.41 617.1,527.79 621.08,531.21 625.06,534.68 629.04,538.19 633.03,541.76 637.01,545.38 640.99,549.06 644.97,552.79 648.95,556.59 652.93,560.49 656.91,564.46 660.89,568.47 664.87,572.5 668.85,576.52 672.83,580.47 676.81,584.32 680.79,588.16 684.77,592.06 688.76,596.14 692.74,600.46 696.72,604.98 700.7,609.64 704.68,614.44 708.66,619.4 712.64,624.51 716.62,629.77 720.6,635.19 724.58,640.76 726.57,643.61 734.53,651.05 743.49,646.99 739.01,638.02 735.03,632.82 731.05,627.7 727.07,622.65 723.09,617.67 719.11,612.76 715.13,607.92 711.15,603.15 707.17,598.45 703.19,593.82 699.2,589.26 695.22,584.76 691.24,580.33 687.26,575.97 683.28,571.67 679.3,567.45 675.32,563.3 671.34,559.26 667.36,555.3 663.38,551.42 659.4,547.6 655.42,543.84 651.44,540.12 647.46,536.44 643.47,532.78 639.49,529.13 635.51,525.53 631.53,521.99 627.55,518.51 623.57,515.06 619.59,511.63 615.61,508.19 611.63,504.77 607.65,501.36 603.67,497.98 599.69,494.64 595.71,491.35 591.73,488.12 587.74,484.95 583.76,481.86 579.78,478.89 575.8,476.01 571.82,473.16 567.84,470.3 563.86,467.41 559.88,464.51 555.9,461.61 551.92,458.71 547.94,455.83 543.96,452.99 539.98,450.19 536,447.44 532.01,444.75 528.03,442.15 524.05,439.63 520.07,437.16 516.09,434.73 512.11,432.29 508.13,429.82 504.15,427.33 500.17,424.86 496.19,422.44 492.21,420.09 488.23,417.85 484.25,415.73 480.27,413.77 476.28,411.96 472.3,410.27 468.32,408.65 464.34,407.08 460.36,405.53 456.38,404 452.4,402.48 448.42,400.98 444.44,399.5 440.46,398.04 436.48,396.62 432.5,395.22 428.52,393.85 424.54,392.51 420.55,391.2 416.57,389.94 412.59,388.71 408.61,387.5 404.63,386.33 400.65,385.18 396.67,384.05 392.69,382.96 388.71,381.91 384.73,380.89 380.75,379.91 376.77,378.97 372.79,378.08 368.81,377.24 364.82,376.48 360.84,375.77 356.86,375.01 352.88,374.23 348.9,373.49 344.92,372.84 340.94,372.33 336.96,372.01 332.98,371.93 329,371.96 325.02,371.99 321.04,372.02 317.06,372.05 313.08,372.07 309.09,372.1 305.11,372.13 301.13,372.19 297.15,372.35 293.17,372.63 289.19,372.99 285.21,373.41 281.23,373.89 277.25,374.4 273.27,374.92 269.29,375.56 265.31,376.36 261.33,377.29 257.35,378.34 253.36,379.47 249.38,380.66 245.4,381.89 241.42,383.14 237.44,384.4 233.46,385.8 229.48,387.32 225.5,388.9 221.52,390.55 217.54,392.26 213.56,394.05 209.58,395.92 205.6,397.86 201.62,399.88" fill="#10a850"/><polygon points="201.62,399.57 205.6,397.54 209.58,395.57 213.56,393.66 217.54,391.81 221.52,390.02 225.5,388.29 229.48,386.62 233.46,385.02 237.44,383.49 241.42,382.04 245.4,380.56 249.38,379.07 253.36,377.59 257.35,376.17 261.33,374.86 265.31,373.69 269.29,372.7 273.27,371.93 277.25,371.33 281.23,370.74 285.21,370.19 289.19,369.7 293.17,369.28 297.15,368.96 301.13,368.75 305.11,368.66 309.09,368.61 313.08,368.58 317.06,368.55 321.04,368.54 325.02,368.54 329,368.55 332.98,368.57 336.96,368.71 340.94,369.09 344.92,369.67 348.9,370.4 352.88,371.22 356.86,372.1 360.84,373.03 364.82,373.94 368.81,374.93 372.79,376.01 376.77,377.13 380.75,378.29 384.73,379.46 388.71,380.67 392.69,381.92 396.67,383.21 400.65,384.51 404.63,385.82 408.61,387.12 412.59,388.4 416.57,389.67 420.55,390.98 424.54,392.32 428.52,393.69 432.5,395.09 436.48,396.52 440.46,397.97 444.44,399.45 448.42,400.94 452.4,402.46 456.38,403.99 460.36,405.53 464.34,407.08 468.32,408.65 472.3,410.27 476.28,411.96 480.27,413.77 484.25,415.73 488.23,417.85 492.21,420.09 496.19,422.44 500.17,424.86 504.15,427.33 508.13,429.82 512.11,432.29 516.09,434.73 520.07,437.16 524.05,439.63 528.03,442.15 532.01,444.75 536,447.44 539.98,450.19 543.96,452.99 547.94,455.83 551.92,458.71 555.9,461.61 559.88,464.51 563.86,467.41 567.84,470.3 571.82,473.16 575.8,476.01 579.78,478.89 583.76,481.86 587.74,484.95 591.73,488.12 595.71,491.35 599.69,494.64 603.67,497.98 607.65,501.36 611.63,504.77 615.61,508.19 619.59,511.63 623.57,515.06 627.55,518.51 631.53,521.99 635.51,525.53 639.49,529.13 643.47,532.78 647.46,536.44 651.44,540.12 655.42,543.84 659.4,547.6 663.38,551.42 667.36,555.3 671.34,559.26 675.32,563.3 679.3,567.45 683.28,571.67 687.26,575.97 691.24,580.33 695.22,584.76 699.2,589.26 703.19,593.82 707.17,598.45 711.15,603.15 715.13,607.92 719.11,612.76 723.09,617.67 727.07,622.65 731.05,627.7 735.03,632.82 739.01,638.02 739.01,642.02 735.03,636.83 731.05,631.72 727.07,626.68 723.09,621.72 719.11,616.82 715.13,611.99 711.15,607.24 707.17,602.55 703.19,597.94 699.2,593.39 695.22,588.91 691.24,584.5 687.26,580.16 683.28,575.88 679.3,571.68 675.32,567.55 671.34,563.53 667.36,559.59 663.38,555.73 659.4,551.94 655.42,548.2 651.44,544.51 647.46,540.85 643.47,537.21 639.49,533.59 635.51,530.01 631.53,526.49 627.55,523.04 623.57,519.62 619.59,516.21 615.61,512.81 611.63,509.42 607.65,506.05 603.67,502.7 599.69,499.4 595.71,496.14 591.73,492.94 587.74,489.81 583.76,486.76 579.78,483.82 575.8,480.98 571.82,478.17 567.84,475.34 563.86,472.5 559.88,469.64 555.9,466.79 551.92,463.94 547.94,461.11 543.96,458.31 539.98,455.55 536,452.84 532.01,450.19 528.03,447.62 524.05,445.12 520.07,442.66 516.09,440.23 512.11,437.79 508.13,435.32 504.15,432.83 500.17,430.36 496.19,427.94 492.21,425.59 488.23,423.35 484.25,421.23 480.27,419.27 476.28,417.46 472.3,415.77 468.32,414.15 464.34,412.58 460.36,411.03 456.38,409.5 452.4,407.98 448.42,406.48 444.44,405 440.46,403.54 436.48,402.12 432.5,400.72 428.52,399.32 424.54,397.91 420.55,396.49 416.57,395.08 412.59,393.68 408.61,392.28 404.63,390.89 400.65,389.51 396.67,388.16 392.69,386.83 388.71,385.54 384.73,384.29 380.75,383.09 376.77,381.95 372.79,380.88 368.81,379.9 364.82,379.01 360.84,378.21 356.86,377.37 352.88,376.51 348.9,375.69 344.92,374.96 340.94,374.38 336.96,373.99 332.98,373.84 329,373.81 325.02,373.77 321.04,373.74 317.06,373.72 313.08,373.69 309.09,373.67 305.11,373.64 301.13,373.65 297.15,373.77 293.17,374 289.19,374.32 285.21,374.71 281.23,375.15 277.25,375.63 273.27,376.12 269.29,376.72 265.31,377.49 261.33,378.39 257.35,379.41 253.36,380.51 249.38,381.68 245.4,382.88 241.42,384.1 237.44,385.35 233.46,386.72 229.48,388.21 225.5,389.78 221.52,391.41 217.54,393.11 213.56,394.88 209.58,396.73 205.6,398.66 201.62,400.68" fill="#0c9044"/><polygon points="182.68,288.39 193.68,288.39 201.34,403.97 190.34,403.97" fill="#10a850"/><polygon points="188.73,288.39 193.68,288.39 201.34,403.97 196.39,403.97" fill="#0e9e4a"/><polygon points="225.97,306.25 236.97,306.25 241.71,387.89 230.71,387.89" fill="#10a850"/><polygon points="232.02,306.25 236.97,306.25 241.71,387.89 236.76,387.89" fill="#0e9e4a"/><polygon points="271.25,324.82 281.75,324.82 284.35,377.2 273.85,377.2" fill="#10a850"/><polygon points="277.03,324.82 281.75,324.82 284.35,377.2 279.62,377.2" fill="#0e9e4a"/><polygon points="316.53,343.6 327.53,343.6 328.82,375.01 317.82,375.01" fill="#10a850"/><polygon points="322.58,343.6 327.53,343.6 328.82,375.01 323.87,375.01" fill="#0e9e4a"/><polygon points="363.8,363.1 374.8,363.1 375.36,380.44 364.36,380.44" fill="#10a850"/><polygon points="369.85,363.1 374.8,363.1 375.36,380.44 370.41,380.44" fill="#0e9e4a"/><polygon points="413.07,383.31 423.57,383.31 423.8,393.54 413.3,393.54" fill="#10a850"/><polygon points="418.84,383.31 423.57,383.31 423.8,393.54 419.07,393.54" fill="#0e9e4a"/><polygon points="464.82,404.66 475.32,404.66 475.41,412.38 464.91,412.38" fill="#10a850"/><polygon points="470.59,404.66 475.32,404.66 475.41,412.38 470.69,412.38" fill="#0e9e4a"/><polygon points="516.56,426 527.06,426 527.11,441.26 516.61,441.26" fill="#10a850"/><polygon points="522.34,426 527.06,426 527.11,441.26 522.39,441.26" fill="#0e9e4a"/><polygon points="569.81,447.96 580.31,447.96 580.09,478.33 569.59,478.33" fill="#10a850"/><polygon points="575.58,447.96 580.31,447.96 580.09,478.33 575.37,478.33" fill="#0e9e4a"/><polygon points="627.03,471.56 637.53,471.56 636.57,524.84 626.07,524.84" fill="#10a850"/><polygon points="632.8,471.56 637.53,471.56 636.57,524.84 631.85,524.84" fill="#0e9e4a"/><polygon points="683.75,495.16 695.25,495.16 692.85,578.8 681.35,578.8" fill="#10a850"/><polygon points="690.08,495.16 695.25,495.16 692.85,578.8 687.68,578.8" fill="#0e9e4a"/><polygon points="743.06,519.77 755.26,519.77 750.15,647.95 737.95,647.95" fill="#10a850"/><polygon points="749.77,519.77 755.26,519.77 750.15,647.95 744.66,647.95" fill="#0e9e4a"/><polygon points="56.82,231.21 949.49,595.9 949.49,604.39 56.82,236.21" fill="#10a850"/><polygon points="163,355 190,345.5 190,355 163,364.5" fill="#12b65a"/><polygon points="163,355 190,345.5 190,348.35 163,357.85" fill="#0e9a48"/><polygon points="166,402 192,392.5 192,402.5 166,412" fill="#12b65a"/><polygon points="166,402 192,392.5 192,395.5 166,405" fill="#0e9a48"/><polygon points="718,598.5 745,584.7 745,597 718,610.8" fill="#12b65a"/><polygon points="718,598.5 745,584.7 745,588.39 718,602.19" fill="#0e9a48"/><polygon points="716,647 741,634.5 741,647.5 716,660" fill="#12b65a"/><polygon points="716,647 741,634.5 741,638.4 716,650.9" fill="#0e9a48"/><line x1="203.05" y1="406.52" x2="233" y2="393.55" stroke="#10a650" stroke-width="4.4"/><line x1="205.05" y1="404.72" x2="233" y2="392.35" stroke="#a8bce0" stroke-width="1.1" stroke-dasharray="3 1"/><line x1="246.11" y1="396.73" x2="275.85" y2="383.45" stroke="#10a650" stroke-width="4.4"/><line x1="248.11" y1="394.93" x2="275.85" y2="382.25" stroke="#a8bce0" stroke-width="1.1" stroke-dasharray="3 1"/><line x1="290.58" y1="395.29" x2="320.11" y2="381.69" stroke="#10a650" stroke-width="4.4"/><line x1="292.58" y1="393.49" x2="320.11" y2="380.49" stroke="#a8bce0" stroke-width="1.1" stroke-dasharray="3 1"/><line x1="337.39" y1="401.06" x2="366.69" y2="387.13" stroke="#10a650" stroke-width="4.4"/><line x1="339.39" y1="399.26" x2="366.69" y2="385.93" stroke="#a8bce0" stroke-width="1.1" stroke-dasharray="3 1"/><line x1="386.37" y1="414.79" x2="415.43" y2="400.51" stroke="#10a650" stroke-width="4.4"/><line x1="388.37" y1="412.99" x2="415.43" y2="399.31" stroke="#a8bce0" stroke-width="1.1" stroke-dasharray="3 1"/><line x1="438.28" y1="435.55" x2="467.1" y2="420.9" stroke="#10a650" stroke-width="4.4"/><line x1="440.28" y1="433.75" x2="467.1" y2="419.7" stroke="#a8bce0" stroke-width="1.1" stroke-dasharray="3 1"/><line x1="490.28" y1="465.11" x2="518.85" y2="450.08" stroke="#10a650" stroke-width="4.4"/><line x1="492.28" y1="463.31" x2="518.85" y2="448.88" stroke="#a8bce0" stroke-width="1.1" stroke-dasharray="3 1"/><line x1="543.57" y1="504.13" x2="571.88" y2="488.73" stroke="#10a650" stroke-width="4.4"/><line x1="545.57" y1="502.33" x2="571.88" y2="487.53" stroke="#a8bce0" stroke-width="1.1" stroke-dasharray="3 1"/><line x1="600.37" y1="551.1" x2="628.4" y2="535.29" stroke="#10a650" stroke-width="4.4"/><line x1="602.37" y1="549.3" x2="628.4" y2="534.09" stroke="#a8bce0" stroke-width="1.1" stroke-dasharray="3 1"/><line x1="656.42" y1="605.6" x2="684.18" y2="589.39" stroke="#10a650" stroke-width="4.4"/><line x1="658.42" y1="603.8" x2="684.18" y2="588.19" stroke="#a8bce0" stroke-width="1.1" stroke-dasharray="3 1"/><polygon points="169,428.5 173,426.55 177,424.54 181,422.47 185,420.21 189,417.83 193,415.5 197,413.37 201,411.59 205,410.09 209,408.8 213,407.66 217,406.66 221,405.79 225,404.96 229,404.17 233,403.46 237,402.86 241,402.4 245,402.01 249,401.66 253,401.37 257,401.13 261,400.96 265,400.82 269,400.69 273,400.58 277,400.52 281,400.51 285,400.65 289,400.93 293,401.3 297,401.71 301,402.09 305,402.48 309,402.88 313,403.32 317,403.79 321,404.3 325,404.86 329,405.47 333,406.14 337,406.91 341,407.92 345,409.13 349,410.46 353,411.81 357,413.11 361,414.28 365,415.31 369,416.3 373,417.27 377,418.28 381,419.39 385,420.65 389,422.08 393,423.64 397,425.27 401,426.91 405,428.57 409,430.25 413,431.98 417,433.73 421,435.51 425,437.33 429,439.17 433,441.05 437,442.95 441,444.89 445,446.86 449,448.88 453,450.94 457,453.06 461,455.25 465,457.5 469,459.84 473,462.27 477,464.78 481,467.36 485,470 489,472.73 493,475.57 497,478.47 501,481.4 505,484.33 509,487.28 513,490.25 517,493.25 521,496.28 525,499.36 529,502.48 533,505.68 537,508.95 541,512.23 545,515.49 549,518.69 553,521.82 557,524.93 561,528.06 565,531.25 569,534.51 573,537.8 577,541.13 581,544.49 585,547.9 589,551.34 593,554.84 597,558.38 601,561.98 605,565.63 609,569.33 613,573.1 617,576.93 621,580.85 625,584.85 629,588.9 633,592.95 637,596.99 641,600.98 645,604.86 649,608.72 653,612.66 657,616.76 661,621.11 665,625.66 669,630.34 673,635.18 677,640.17 681,645.3 685,650.59 689,656.04 693,661.64 695,664.5 703,672 712,668 707.5,659 703.5,653.78 699.5,648.63 695.5,643.55 691.5,638.54 687.5,633.6 683.5,628.73 679.5,623.94 675.5,619.21 671.5,614.54 667.5,609.95 663.5,605.43 659.5,600.97 655.5,596.58 651.5,592.26 647.5,588 643.5,583.83 639.5,579.75 635.5,575.77 631.5,571.86 627.5,568.01 623.5,564.22 619.5,560.48 615.5,556.76 611.5,553.08 607.5,549.4 603.5,545.77 599.5,542.2 595.5,538.69 591.5,535.22 587.5,531.75 583.5,528.29 579.5,524.84 575.5,521.4 571.5,517.99 567.5,514.63 563.5,511.31 559.5,508.04 555.5,504.85 551.5,501.73 547.5,498.73 543.5,495.82 539.5,492.94 535.5,490.06 531.5,487.14 527.5,484.21 523.5,481.27 519.5,478.35 515.5,475.44 511.5,472.57 507.5,469.74 503.5,466.96 499.5,464.25 495.5,461.62 491.5,459.07 487.5,456.58 483.5,454.11 479.5,451.65 475.5,449.14 471.5,446.63 467.5,444.13 463.5,441.68 459.5,439.3 455.5,437.03 451.5,434.88 447.5,432.9 443.5,431.06 439.5,429.33 435.5,427.69 431.5,426.09 427.5,424.51 423.5,422.95 419.5,421.4 415.5,419.87 411.5,418.37 407.5,416.88 403.5,415.43 399.5,414 395.5,412.6 391.5,411.23 387.5,409.9 383.5,408.6 379.5,407.34 375.5,406.12 371.5,404.91 367.5,403.73 363.5,402.58 359.5,401.46 355.5,400.37 351.5,399.33 347.5,398.32 343.5,397.35 339.5,396.43 335.5,395.57 331.5,394.77 327.5,394.04 323.5,393.25 319.5,392.44 315.5,391.67 311.5,390.99 307.5,390.45 303.5,390.11 299.5,390 295.5,390 291.5,390 287.5,390 283.5,390 279.5,390 275.5,390 271.5,390 267.5,390.03 263.5,390.16 259.5,390.41 255.5,390.74 251.5,391.14 247.5,391.59 243.5,392.07 239.5,392.56 235.5,393.17 231.5,393.94 227.5,394.84 223.5,395.86 219.5,396.96 215.5,398.13 211.5,399.33 207.5,400.55 203.5,401.79 199.5,403.16 195.5,404.64 191.5,406.2 187.5,407.82 183.5,409.5 179.5,411.26 175.5,413.1 171.5,415.01 167.5,417" fill="#12b65a"/><polygon points="167.5,416.7 171.5,414.7 175.5,412.75 179.5,410.87 183.5,409.05 187.5,407.29 191.5,405.59 195.5,403.95 199.5,402.37 203.5,400.88 207.5,399.45 211.5,398 215.5,396.53 219.5,395.09 223.5,393.7 227.5,392.41 231.5,391.27 235.5,390.31 239.5,389.57 243.5,389 247.5,388.44 251.5,387.92 255.5,387.45 259.5,387.06 263.5,386.77 267.5,386.59 271.5,386.53 275.5,386.51 279.5,386.5 283.5,386.51 287.5,386.52 291.5,386.55 295.5,386.59 299.5,386.64 303.5,386.8 307.5,387.21 311.5,387.82 315.5,388.58 319.5,389.43 323.5,390.34 327.5,391.3 331.5,392.24 335.5,393.26 339.5,394.36 343.5,395.52 347.5,396.7 351.5,397.89 355.5,399.13 359.5,400.42 363.5,401.73 367.5,403.07 371.5,404.4 375.5,405.73 379.5,407.04 383.5,408.34 387.5,409.68 391.5,411.04 395.5,412.45 399.5,413.88 403.5,415.33 407.5,416.81 411.5,418.32 415.5,419.84 419.5,421.38 423.5,422.94 427.5,424.51 431.5,426.09 435.5,427.69 439.5,429.33 443.5,431.06 447.5,432.9 451.5,434.88 455.5,437.03 459.5,439.3 463.5,441.68 467.5,444.13 471.5,446.63 475.5,449.14 479.5,451.65 483.5,454.11 487.5,456.58 491.5,459.07 495.5,461.62 499.5,464.25 503.5,466.96 507.5,469.74 511.5,472.57 515.5,475.44 519.5,478.35 523.5,481.27 527.5,484.21 531.5,487.14 535.5,490.06 539.5,492.94 543.5,495.82 547.5,498.73 551.5,501.73 555.5,504.85 559.5,508.04 563.5,511.31 567.5,514.63 571.5,517.99 575.5,521.4 579.5,524.84 583.5,528.29 587.5,531.75 591.5,535.22 595.5,538.69 599.5,542.2 603.5,545.77 607.5,549.4 611.5,553.08 615.5,556.76 619.5,560.48 623.5,564.22 627.5,568.01 631.5,571.86 635.5,575.77 639.5,579.75 643.5,583.83 647.5,588 651.5,592.26 655.5,596.58 659.5,600.97 663.5,605.43 667.5,609.95 671.5,614.54 675.5,619.21 679.5,623.94 683.5,628.73 687.5,633.6 691.5,638.54 695.5,643.55 699.5,648.63 703.5,653.78 707.5,659 707.5,663 703.5,657.79 699.5,652.65 695.5,647.58 691.5,642.58 687.5,637.66 683.5,632.81 679.5,628.02 675.5,623.31 671.5,618.66 667.5,614.09 663.5,609.58 659.5,605.14 655.5,600.77 651.5,596.47 647.5,592.23 643.5,588.08 639.5,584.03 635.5,580.06 631.5,576.17 627.5,572.35 623.5,568.58 619.5,564.86 615.5,561.17 611.5,557.51 607.5,553.85 603.5,550.25 599.5,546.71 595.5,543.22 591.5,539.77 587.5,536.34 583.5,532.91 579.5,529.49 575.5,526.08 571.5,522.71 567.5,519.38 563.5,516.09 559.5,512.87 555.5,509.71 551.5,506.63 547.5,503.66 543.5,500.79 539.5,497.95 535.5,495.1 531.5,492.22 527.5,489.34 523.5,486.45 519.5,483.58 515.5,480.72 511.5,477.89 507.5,475.1 503.5,472.37 499.5,469.69 495.5,467.09 491.5,464.56 487.5,462.07 483.5,459.61 479.5,457.15 475.5,454.64 471.5,452.13 467.5,449.63 463.5,447.18 459.5,444.8 455.5,442.53 451.5,440.38 447.5,438.4 443.5,436.56 439.5,434.83 435.5,433.19 431.5,431.59 427.5,430.01 423.5,428.45 419.5,426.9 415.5,425.37 411.5,423.87 407.5,422.38 403.5,420.93 399.5,419.5 395.5,418.07 391.5,416.63 387.5,415.19 383.5,413.75 379.5,412.32 375.5,410.89 371.5,409.47 367.5,408.07 363.5,406.68 359.5,405.33 355.5,404.01 351.5,402.73 347.5,401.5 343.5,400.34 339.5,399.24 335.5,398.22 331.5,397.31 327.5,396.48 323.5,395.61 319.5,394.72 315.5,393.87 311.5,393.12 307.5,392.5 303.5,392.09 299.5,391.91 295.5,391.85 291.5,391.79 287.5,391.73 283.5,391.67 279.5,391.61 275.5,391.56 271.5,391.51 267.5,391.49 263.5,391.58 259.5,391.79 255.5,392.08 251.5,392.44 247.5,392.85 243.5,393.3 239.5,393.76 235.5,394.34 231.5,395.07 227.5,395.95 223.5,396.94 219.5,398.01 215.5,399.15 211.5,400.32 207.5,401.51 203.5,402.73 199.5,404.08 195.5,405.54 191.5,407.08 187.5,408.68 183.5,410.35 179.5,412.09 175.5,413.92 171.5,415.82 167.5,417.8" fill="#0e9c4a"/><polygon points="148.5,305.42 159.5,305.42 167.16,421 156.16,421" fill="#12b65a"/><polygon points="154.55,305.42 159.5,305.42 167.16,421 162.21,421" fill="#10ac54"/><polygon points="192,323.59 203,323.59 207.74,405.23 196.74,405.23" fill="#12b65a"/><polygon points="198.05,323.59 203,323.59 207.74,405.23 202.79,405.23" fill="#10ac54"/><polygon points="237.5,342.48 248,342.48 250.59,394.86 240.09,394.86" fill="#12b65a"/><polygon points="243.28,342.48 248,342.48 250.59,394.86 245.87,394.86" fill="#10ac54"/><polygon points="283,361.59 294,361.59 295.29,393 284.29,393" fill="#12b65a"/><polygon points="289.05,361.59 294,361.59 295.29,393 290.34,393" fill="#10ac54"/><polygon points="330.5,381.43 341.5,381.43 342.05,398.77 331.05,398.77" fill="#12b65a"/><polygon points="336.55,381.43 341.5,381.43 342.05,398.77 337.1,398.77" fill="#10ac54"/><polygon points="380,401.99 390.5,401.99 390.73,412.22 380.23,412.22" fill="#12b65a"/><polygon points="385.77,401.99 390.5,401.99 390.73,412.22 386.01,412.22" fill="#10ac54"/><polygon points="432,423.71 442.5,423.71 442.6,431.43 432.1,431.43" fill="#12b65a"/><polygon points="437.77,423.71 442.5,423.71 442.6,431.43 437.87,431.43" fill="#10ac54"/><polygon points="484,445.42 494.5,445.42 494.55,460.68 484.05,460.68" fill="#12b65a"/><polygon points="489.77,445.42 494.5,445.42 494.55,460.68 489.82,460.68" fill="#10ac54"/><polygon points="537.5,467.76 548,467.76 547.79,498.14 537.29,498.14" fill="#12b65a"/><polygon points="543.27,467.76 548,467.76 547.79,498.14 543.06,498.14" fill="#10ac54"/><polygon points="595,491.78 605.5,491.78 604.55,545.06 594.05,545.06" fill="#12b65a"/><polygon points="600.77,491.78 605.5,491.78 604.55,545.06 599.82,545.06" fill="#10ac54"/><polygon points="652,515.79 663.5,515.79 661.1,599.43 649.6,599.43" fill="#12b65a"/><polygon points="658.33,515.79 663.5,515.79 661.1,599.43 655.93,599.43" fill="#10ac54"/><polygon points="711.6,540.82 723.8,540.82 718.69,669 706.49,669" fill="#12b65a"/><polygon points="718.31,540.82 723.8,540.82 718.69,669 713.2,669" fill="#10ac54"/><polygon points="22,247.3 920,618.8 924,620.3 924,627.8 920,627.3 22,252.3" fill="#12b65a"/><polygon points="944,596 958,590.5 958,600 951,604 944,601" fill="#12b65a"/><polygon points="937,601 944.5,606 946.5,612 941,615 935,609" fill="#0a7a30"/><polygon points="937,601 941,608.5 935,609" fill="#0c9a3c"/><rect x="955" y="595.5" width="7.5" height="7.5" fill="#e81010"/><rect x="922.5" y="616.5" width="7.5" height="9.5" fill="#e81010"/><polygon points="955,595 958,592 959.5,594.5" fill="#e81010"/><polygon points="923,616.5 926,613.5 927,616.5" fill="#e81010"/><defs><linearGradient id="dk" gradientUnits="userSpaceOnUse" x1="40" y1="235" x2="940" y2="600"><stop offset="0" stop-color="#818181"/><stop offset="0.3" stop-color="#858585"/><stop offset="0.42" stop-color="#8f8f8f"/><stop offset="0.55" stop-color="#8a8a8a"/><stop offset="1" stop-color="#8e8e8e"/></linearGradient></defs><polygon points="63,226.8 963.5,588.4 920,613 22,243" fill="url(#dk)"/><defs><linearGradient id="fc" gradientUnits="userSpaceOnUse" x1="63" y1="222" x2="963" y2="582"><stop offset="0" stop-color="#a2a2a2"/><stop offset="0.5" stop-color="#b0b0b0"/><stop offset="1" stop-color="#bababa"/></linearGradient><linearGradient id="nc" gradientUnits="userSpaceOnUse" x1="22" y1="243" x2="920" y2="613"><stop offset="0" stop-color="#a0a0a0"/><stop offset="0.5" stop-color="#a8a8a8"/><stop offset="1" stop-color="#b0b0b0"/></linearGradient></defs><polygon points="63,222 963.5,581.9 963.5,588.4 63,226.8" fill="url(#fc)"/><polygon points="22,243 920,613 920,618.8 22,247.3" fill="url(#nc)"/><polygon points="16.5,240 22,243 22,247.3 16.5,245.5" fill="#a4a4a4"/><polygon points="960.8,587.6 963.5,581.9 963.5,588.3" fill="#9a9a9a"/><polygon points="156,418.5 159,418 160,420 163,418.5 166,419.5 166.5,422 169.5,423.5 168.5,426 169.5,428 167,429 164.5,427 162,426.5 161.5,424.5 158.5,424.5 158,421" fill="#e81010"/><rect x="164" y="423.5" width="2.6" height="2.2" fill="#1020e0"/><rect x="189.5" y="402.5" width="3.5" height="3" fill="#e81010"/><polygon points="695.5,662.5 698,661.5 700,664 703,662 704.5,665 703.5,668.5 706,669 708,671.5 711,669.5 713,671.5 716,669.5 717.5,672 714.5,674 715,676.5 711.5,675 709,677 706.5,674.5 704,675 703.5,671 700,670 698.5,667" fill="#e81010"/><rect x="696.5" y="665.5" width="2.6" height="2.4" fill="#1020e0"/><polygon points="737.5,648 740,646.5 742.5,649 745.5,647.5 748,649 750.5,646.5 752,649.5 750,652 751,655 747.5,653.5 745,655.5 742.5,653 739.5,654.5 739.5,651" fill="#e81010"/><rect x="19.5" y="246.5" width="2" height="2" fill="#e81010"/><rect x="172" y="426.74" width="1.6" height="1.3" fill="#e02020"/><rect x="178" y="423.73" width="1.6" height="1.3" fill="#e02020"/><rect x="184" y="420.49" width="1.6" height="1.3" fill="#e02020"/><rect x="190" y="416.94" width="1.6" height="1.3" fill="#e02020"/><rect x="196" y="413.58" width="1.6" height="1.3" fill="#e02020"/><rect x="203" y="410.51" width="1.6" height="1.3" fill="#e02020"/><rect x="209" y="408.5" width="1.6" height="1.3" fill="#e02020"/><rect x="215" y="406.85" width="1.6" height="1.3" fill="#e02020"/><rect x="222" y="405.28" width="1.6" height="1.3" fill="#e02020"/><rect x="232" y="403.33" width="1.6" height="1.3" fill="#e02020"/><rect x="247" y="401.53" width="1.6" height="1.3" fill="#e02020"/><rect x="262" y="400.63" width="1.6" height="1.3" fill="#e02020"/><rect x="290" y="400.72" width="1.6" height="1.3" fill="#e02020"/><rect x="315" y="403.25" width="1.6" height="1.3" fill="#e02020"/><rect x="345" y="408.83" width="1.6" height="1.3" fill="#e02020"/><rect x="365" y="415.01" width="1.6" height="1.3" fill="#e02020"/><rect x="382" y="419.39" width="1.6" height="1.3" fill="#e02020"/><rect x="414" y="432.11" width="1.6" height="1.3" fill="#e02020"/><rect x="455" y="451.7" width="1.6" height="1.3" fill="#e02020"/><circle cx="153" cy="301.41" r="1.5" fill="#0a8a20"/><circle cx="196.5" cy="319.4" r="1.5" fill="#0a8a20"/><circle cx="199.05" cy="406.27" r="1.5" fill="#0a8a20"/><circle cx="206.05" cy="407.27" r="1.5" fill="#0a8a20"/><circle cx="193.05" cy="411.48" r="1.5" fill="#0a8a20"/><circle cx="213.05" cy="403.65" r="1.5" fill="#0a8a20"/><circle cx="241.75" cy="338.12" r="1.5" fill="#0a8a20"/><circle cx="242.11" cy="395.87" r="1.5" fill="#0a8a20"/><circle cx="249.11" cy="396.87" r="1.5" fill="#0a8a20"/><circle cx="236.11" cy="398.98" r="1.5" fill="#0a8a20"/><circle cx="256.11" cy="397.18" r="1.5" fill="#0a8a20"/><circle cx="287.5" cy="357.05" r="1.5" fill="#0a8a20"/><circle cx="286.58" cy="394" r="1.5" fill="#0a8a20"/><circle cx="293.58" cy="395" r="1.5" fill="#0a8a20"/><circle cx="280.58" cy="396.5" r="1.5" fill="#0a8a20"/><circle cx="300.58" cy="398.05" r="1.5" fill="#0a8a20"/><circle cx="335" cy="376.7" r="1.5" fill="#0a8a20"/><circle cx="333.39" cy="399.75" r="1.5" fill="#0a8a20"/><circle cx="340.39" cy="400.75" r="1.5" fill="#0a8a20"/><circle cx="327.39" cy="401.22" r="1.5" fill="#0a8a20"/><circle cx="347.39" cy="405.92" r="1.5" fill="#0a8a20"/><circle cx="384.25" cy="397.08" r="1.5" fill="#0a8a20"/><circle cx="382.37" cy="413.2" r="1.5" fill="#0a8a20"/><circle cx="389.37" cy="414.2" r="1.5" fill="#0a8a20"/><circle cx="376.37" cy="414.12" r="1.5" fill="#0a8a20"/><circle cx="396.37" cy="421.01" r="1.5" fill="#0a8a20"/><circle cx="436.25" cy="418.59" r="1.5" fill="#0a8a20"/><circle cx="434.28" cy="432.42" r="1.5" fill="#0a8a20"/><circle cx="441.28" cy="433.42" r="1.5" fill="#0a8a20"/><circle cx="428.28" cy="434.84" r="1.5" fill="#0a8a20"/><circle cx="448.28" cy="444.51" r="1.5" fill="#0a8a20"/><circle cx="488.25" cy="440.1" r="1.5" fill="#0a8a20"/><circle cx="486.28" cy="461.68" r="1.5" fill="#0a8a20"/><circle cx="493.28" cy="462.68" r="1.5" fill="#0a8a20"/><circle cx="480.28" cy="462.89" r="1.5" fill="#0a8a20"/><circle cx="500.28" cy="476.87" r="1.5" fill="#0a8a20"/><circle cx="541.75" cy="462.23" r="1.5" fill="#0a8a20"/><circle cx="539.57" cy="499.15" r="1.5" fill="#0a8a20"/><circle cx="546.57" cy="500.15" r="1.5" fill="#0a8a20"/><circle cx="533.57" cy="502.15" r="1.5" fill="#0a8a20"/><circle cx="553.57" cy="518.26" r="1.5" fill="#0a8a20"/><circle cx="599.25" cy="486.02" r="1.5" fill="#0a8a20"/><circle cx="596.37" cy="546.09" r="1.5" fill="#0a8a20"/><circle cx="603.37" cy="547.09" r="1.5" fill="#0a8a20"/><circle cx="590.37" cy="548.54" r="1.5" fill="#0a8a20"/><circle cx="610.37" cy="566.62" r="1.5" fill="#0a8a20"/><circle cx="656.75" cy="509.81" r="1.5" fill="#0a8a20"/><circle cx="652.42" cy="600.49" r="1.5" fill="#0a8a20"/><circle cx="659.42" cy="601.49" r="1.5" fill="#0a8a20"/><circle cx="646.42" cy="602.23" r="1.5" fill="#0a8a20"/><circle cx="666.42" cy="623.3" r="1.5" fill="#0a8a20"/><circle cx="716.7" cy="534.61" r="1.5" fill="#0a8a20"/><circle cx="151.46" cy="312" r="1.3" fill="#0a8a20"/><circle cx="156.96" cy="313" r="1.3" fill="#0a8a20"/><circle cx="151.86" cy="318" r="1.3" fill="#0a8a20"/><circle cx="157.36" cy="319" r="1.3" fill="#0a8a20"/><circle cx="154.12" cy="352" r="1.3" fill="#0a8a20"/><circle cx="159.62" cy="353" r="1.3" fill="#0a8a20"/><circle cx="154.51" cy="358" r="1.3" fill="#0a8a20"/><circle cx="160.01" cy="359" r="1.3" fill="#0a8a20"/><circle cx="154.91" cy="364" r="1.3" fill="#0a8a20"/><circle cx="160.41" cy="365" r="1.3" fill="#0a8a20"/><circle cx="157.56" cy="404" r="1.3" fill="#0a8a20"/><circle cx="163.06" cy="405" r="1.3" fill="#0a8a20"/><circle cx="157.96" cy="410" r="1.3" fill="#0a8a20"/><circle cx="163.46" cy="411" r="1.3" fill="#0a8a20"/><circle cx="158.36" cy="416" r="1.3" fill="#0a8a20"/><circle cx="163.86" cy="417" r="1.3" fill="#0a8a20"/><circle cx="714.4" cy="552" r="1.4" fill="#0a8a20"/><circle cx="720.9" cy="553" r="1.4" fill="#0a8a20"/><circle cx="714.08" cy="560" r="1.4" fill="#0a8a20"/><circle cx="720.58" cy="561" r="1.4" fill="#0a8a20"/><circle cx="712.49" cy="600" r="1.4" fill="#0a8a20"/><circle cx="718.99" cy="601" r="1.4" fill="#0a8a20"/><circle cx="712.21" cy="607" r="1.4" fill="#0a8a20"/><circle cx="718.71" cy="608" r="1.4" fill="#0a8a20"/><circle cx="711.93" cy="614" r="1.4" fill="#0a8a20"/><circle cx="718.43" cy="615" r="1.4" fill="#0a8a20"/><circle cx="710.57" cy="648" r="1.4" fill="#0a8a20"/><circle cx="717.07" cy="649" r="1.4" fill="#0a8a20"/><circle cx="710.29" cy="655" r="1.4" fill="#0a8a20"/><circle cx="716.79" cy="656" r="1.4" fill="#0a8a20"/><circle cx="710.01" cy="662" r="1.4" fill="#0a8a20"/><circle cx="716.51" cy="663" r="1.4" fill="#0a8a20"/><circle cx="744.31" cy="586" r="1.3" fill="#0a8a20"/><circle cx="750.31" cy="585" r="1.3" fill="#0a8a20"/><circle cx="743.95" cy="594" r="1.3" fill="#0a8a20"/><circle cx="749.95" cy="593" r="1.3" fill="#0a8a20"/><circle cx="742.03" cy="636" r="1.3" fill="#0a8a20"/><circle cx="748.03" cy="635" r="1.3" fill="#0a8a20"/><circle cx="741.71" cy="643" r="1.3" fill="#0a8a20"/><circle cx="747.71" cy="642" r="1.3" fill="#0a8a20"/><circle cx="32" cy="253.96" r="1.4" fill="#0a8a20"/><circle cx="70" cy="269.75" r="1.4" fill="#0a8a20"/><circle cx="110" cy="286.38" r="1.4" fill="#0a8a20"/><circle cx="905" cy="617.1" r="1.6" fill="#0a8a20"/><rect x="2" y="141" width="1" height="643" fill="#fff"/><rect x="3" y="141" width="1" height="637" fill="#808080"/><rect x="4" y="141" width="1" height="636" fill="#202020"/><rect x="4" y="141" width="992" height="1" fill="#606060"/><rect x="4" y="776" width="993" height="1" fill="#606060"/><rect x="3" y="777" width="995" height="2" fill="#e4e4e4"/><rect x="3" y="779" width="995" height="1" fill="#a0a0a0"/><rect x="3" y="780" width="995" height="1" fill="#606060"/><rect x="995" y="141" width="1" height="636" fill="#606060"/><rect x="996" y="141" width="1" height="639" fill="#d8d8d8"/><rect x="997" y="141" width="1" height="640" fill="#303030"/><rect x="0" y="784" width="1000" height="1" fill="#101010"/><rect x="999" y="141" width="1" height="644" fill="#303030"/></svg></div>
<div id="axisbox" class="r" style="left:4px;top:141px;width:64px;height:63px;"><svg width="64" height="63" viewBox="4 141 64 63" shape-rendering="crispEdges"><rect x="4" y="141" width="63" height="62" fill="#f2f6f8"/><rect x="66" y="141" width="1" height="63" fill="#303030"/><rect x="4" y="203" width="63" height="1" fill="#303030"/><g transform="translate(0,0)" shape-rendering="geometricPrecision"><line x1="36.5" y1="172" x2="36.5" y2="154" stroke="#000" stroke-width="0.9"/><line x1="36.5" y1="172" x2="52" y2="178.3" stroke="#000" stroke-width="0.9"/><line x1="36.5" y1="172" x2="23" y2="178.8" stroke="#000" stroke-width="0.9"/><polygon points="36.5,152.8 35.3,155.5 37.7,155.5" fill="#000"/><polygon points="53,178.8 50,178.9 51,176.4" fill="#000"/><polygon points="22,179.3 25,179.4 24,176.9" fill="#000"/></g><text x="33" y="150.6" font-size="10.6" fill="#000" style="font-weight:bold" stroke="#000" stroke-width="0.35">Y</text><text x="54" y="184.6" font-size="10.6" fill="#000" style="font-weight:bold" stroke="#000" stroke-width="0.35">X</text><text x="13.5" y="185.6" font-size="10.6" fill="#000" style="font-weight:bold" stroke="#000" stroke-width="0.35">Z</text></svg></div>
<div id="viewtoolbar" class="r" style="left:70px;top:143px;width:174px;height:21px;"><svg width="174" height="21" viewBox="70 143 174 21" shape-rendering="crispEdges"><rect x="70" y="143" width="174" height="21" fill="#c0c0c0"/><rect x="70" y="143" width="174" height="1" fill="#ffffff"/><rect x="70" y="143" width="1" height="21" fill="#ffffff"/><rect x="70" y="163" width="174" height="1" fill="#808080"/><rect x="243" y="143" width="1" height="21" fill="#808080"/><rect x="73" y="145" width="16" height="17" fill="#dcdcdc"/><rect x="73" y="145" width="16" height="1" fill="#808080"/><rect x="73" y="145" width="1" height="17" fill="#808080"/><rect x="73" y="161" width="16" height="1" fill="#ffffff"/><rect x="88" y="145" width="1" height="17" fill="#ffffff"/><rect x="144" y="146" width="1" height="15" fill="#808080"/><rect x="145" y="146" width="1" height="15" fill="#ffffff"/><rect x="220" y="146" width="1" height="15" fill="#808080"/><rect x="221" y="146" width="1" height="15" fill="#ffffff"/><g transform="translate(0,0)" shape-rendering="geometricPrecision"><polygon points="78.5,148 78.5,158 81,155.8 83,159.5 84.3,158.8 82.5,155.2 85.5,155" fill="#fff" stroke="#000" stroke-width="0.9"/><ellipse cx="97.5" cy="153.5" rx="5.3" ry="2.6" fill="none" stroke="#1028e0" stroke-width="1.2"/><ellipse cx="97.5" cy="153.5" rx="2.6" ry="5.3" fill="none" stroke="#1028e0" stroke-width="1.2"/><polygon points="100,157 103.5,156 101,159.5" fill="#1028e0"/><polygon points="92,151 94,148 95.5,151.5" fill="#1028e0"/><line x1="115" y1="148.5" x2="115" y2="158" stroke="#1028e0" stroke-width="1.3"/><path d="M110.5 154.5 c0 5 9 5 9 0" fill="none" stroke="#1028e0" stroke-width="1.3"/><line x1="112.5" y1="151.5" x2="117.5" y2="151.5" stroke="#1028e0" stroke-width="1.2"/><polygon points="113.3,149.5 116.7,149.5 115,147" fill="#1028e0"/><polygon points="109.5,156 112,154 110,153" fill="#1028e0"/><polygon points="120.5,156 118,154 120,153" fill="#1028e0"/><ellipse cx="133" cy="152.5" rx="5.8" ry="3.8" fill="none" stroke="#1028e0" stroke-width="1.3"/><circle cx="133.5" cy="152.5" r="2.3" fill="#1028e0"/><line x1="127" y1="152.5" x2="130" y2="152.5" stroke="#1028e0" stroke-width="1.2"/><line x1="136" y1="156" x2="140" y2="159.5" stroke="#1028e0" stroke-width="1.6"/><line x1="131" y1="156.5" x2="135" y2="158.5" stroke="#1028e0" stroke-width="1.1"/><line x1="148.5" y1="150" x2="158" y2="150" stroke="#1028e0" stroke-width="1.4"/><polygon points="157,147.5 161.5,150 157,152.5" fill="#1028e0"/><line x1="150" y1="153.5" x2="156" y2="153.5" stroke="#1028e0" stroke-width="1.2"/><polygon points="150.5,155 156,155 153.2,159.5" fill="#1028e0"/><rect x="149" y="148.5" width="3" height="3" fill="#1028e0"/><line x1="168" y1="149" x2="178" y2="154.5" stroke="#1028e0" stroke-width="1.3"/><polygon points="176,152 181,155.5 175.5,156" fill="#1028e0"/><circle cx="170" cy="156.5" r="1.3" fill="#1028e0"/><text x="186" y="151" font-size="4.6" fill="#1028e0" textLength="12" lengthAdjust="spacingAndGlyphs" style="font-weight:bold">INFO</text><rect x="187" y="152.5" width="8" height="6" fill="none" stroke="#1028e0" stroke-width="1.2" rx="1.5"/><polygon points="195,154 198,152.8 198,158.2 195,157" fill="#1028e0"/><line x1="188.5" y1="155.5" x2="192.5" y2="155.5" stroke="#1028e0" stroke-width="1"/><text x="203.5" y="151" font-size="4.6" fill="#1028e0" textLength="12" lengthAdjust="spacingAndGlyphs" style="font-weight:bold">SHOT</text><rect x="204.5" y="152.5" width="8" height="6" fill="none" stroke="#1028e0" stroke-width="1.2" rx="1.5"/><polygon points="212.5,154 215.5,152.8 215.5,158.2 212.5,157" fill="#1028e0"/><line x1="206" y1="155.5" x2="210" y2="155.5" stroke="#1028e0" stroke-width="1"/><circle cx="232.5" cy="154" r="1.2" fill="#1028e0"/></g></svg></div>
<div id="sidepanel" class="r" style="left:974px;top:144px;width:19px;height:35px;"><svg width="19" height="35" viewBox="974 144 19 35" shape-rendering="crispEdges"><rect x="974" y="144" width="19" height="35" fill="#c0c0c0"/><rect x="974" y="144" width="19" height="1" fill="#a8a8a8"/><rect x="974" y="144" width="1" height="35" fill="#a8a8a8"/><rect x="974" y="178" width="19" height="1" fill="#ffffff"/><rect x="992" y="144" width="1" height="35" fill="#ffffff"/><g transform="translate(0,0)" shape-rendering="geometricPrecision"><rect x="981.5" y="147.5" width="8" height="7.5" fill="#404040" stroke="#000" stroke-width="1"/><rect x="984" y="149" width="4" height="3.5" fill="#c0a000"/><rect x="986" y="148.5" width="2.5" height="2" fill="#e0e0e0"/><rect x="978.5" y="151.5" width="7.5" height="6.5" fill="#f0f0f0" stroke="#000" stroke-width="1"/><line x1="978.5" y1="153.2" x2="986" y2="153.2" stroke="#000" stroke-width="1"/><rect x="979" y="163.5" width="9.5" height="12" fill="#d8d8d8" stroke="#a8a8a8" stroke-width="1"/><line x1="979" y1="166.5" x2="988.5" y2="166.5" stroke="#a8a8a8" stroke-width="1"/><line x1="979" y1="169.5" x2="988.5" y2="169.5" stroke="#a8a8a8" stroke-width="1"/><line x1="979" y1="172.5" x2="988.5" y2="172.5" stroke="#a8a8a8" stroke-width="1"/><line x1="989.5" y1="164.5" x2="989.5" y2="176.5" stroke="#fff" stroke-width="1"/><line x1="980" y1="176.5" x2="989.5" y2="176.5" stroke="#fff" stroke-width="1"/></g></svg></div>
<div id="statusbar" class="r" style="left:0px;top:785px;width:1000px;height:15px;"><svg width="1000" height="15" viewBox="0 785 1000 15" shape-rendering="crispEdges"><rect x="1" y="786" width="77" height="1" fill="#808080"/><rect x="1" y="786" width="1" height="13" fill="#808080"/><rect x="1" y="798" width="77" height="1" fill="#ffffff"/><rect x="77" y="786" width="1" height="13" fill="#ffffff"/><rect x="79" y="786" width="849" height="1" fill="#808080"/><rect x="79" y="786" width="1" height="13" fill="#808080"/><rect x="79" y="798" width="849" height="1" fill="#ffffff"/><rect x="927" y="786" width="1" height="13" fill="#ffffff"/><rect x="930" y="786" width="68" height="1" fill="#808080"/><rect x="930" y="786" width="1" height="13" fill="#808080"/><rect x="930" y="798" width="68" height="1" fill="#ffffff"/><rect x="997" y="786" width="1" height="13" fill="#ffffff"/><text x="4" y="795.8" font-size="9.6" fill="#000" textLength="26.5" lengthAdjust="spacingAndGlyphs">モード:</text><text x="33" y="795.8" font-size="9.6" fill="#000080" textLength="17.5" lengthAdjust="spacingAndGlyphs">編集</text></svg></div>
</body></html>
